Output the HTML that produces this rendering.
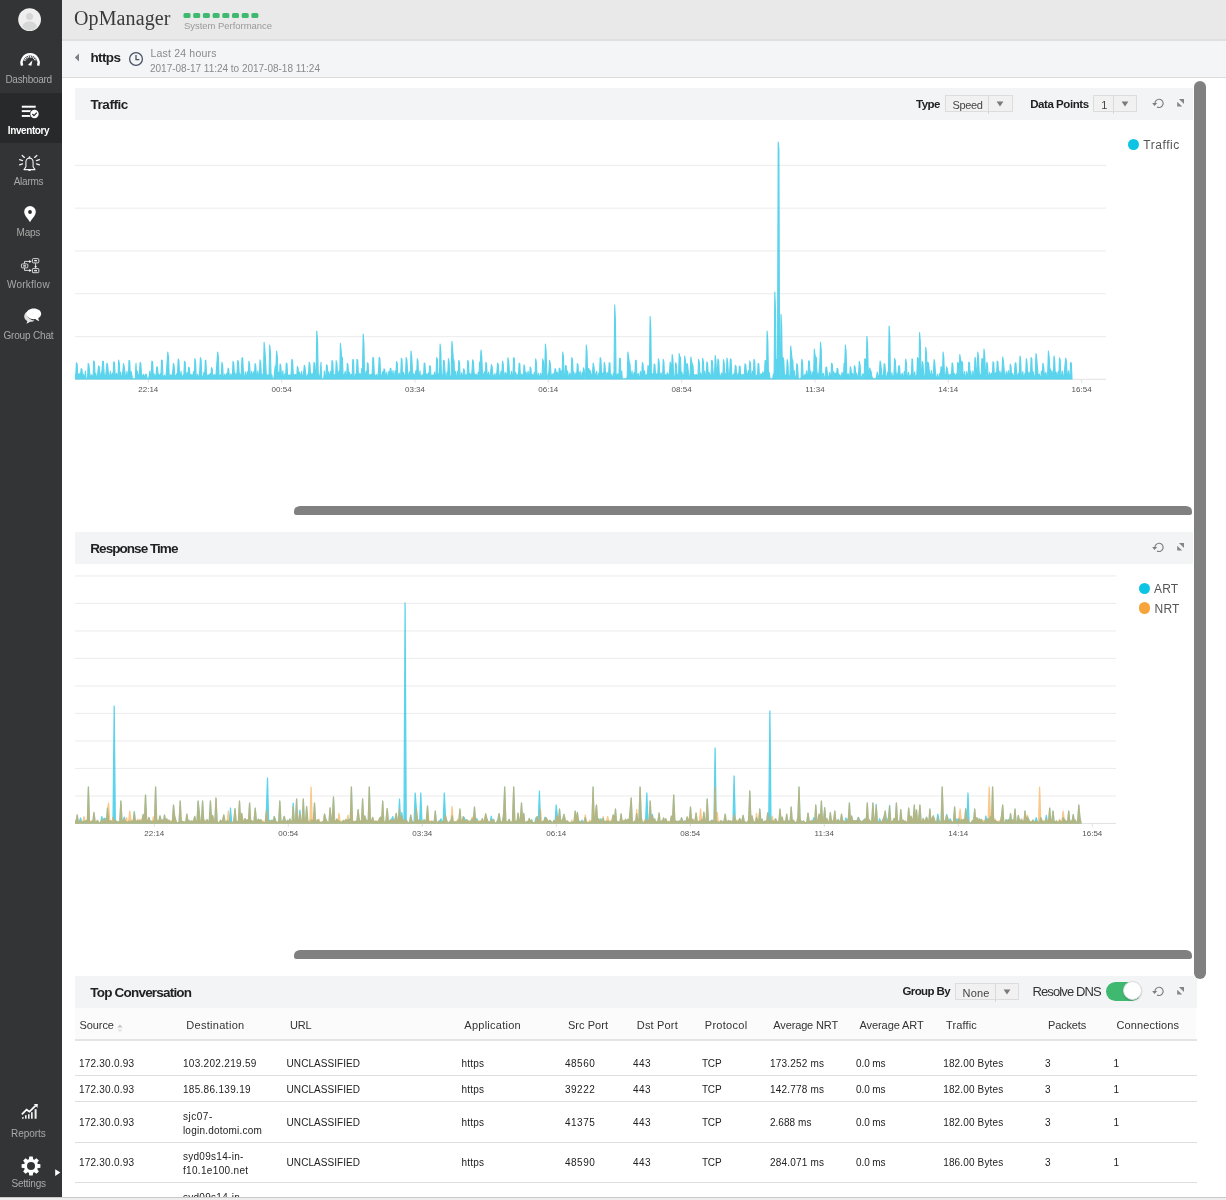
<!DOCTYPE html>
<html>
<head>
<meta charset="utf-8">
<title>OpManager</title>
<style>
*{box-sizing:border-box;margin:0;padding:0}
html,body{width:1226px;height:1200px;overflow:hidden;background:#fff}
body{font-family:"Liberation Sans",sans-serif;color:#222;position:relative}
.abs{position:absolute}
.t{position:absolute;white-space:nowrap;line-height:1}
#side{position:absolute;left:0;top:0;width:62px;height:1197px;background:#333435}
#side .act{position:absolute;left:0;top:93px;width:62px;height:49.5px;background:#28292a}
#side .lb{position:absolute;left:-21px;width:100px;text-align:center;font-size:10px;color:#a9a9a9;line-height:1;white-space:nowrap}
#side svg{position:absolute}
#bot{position:absolute;left:0;top:1197px;width:1226px;height:3px;background:#eee;border-top:1px solid #c9c9c9}
#top{position:absolute;left:62px;top:0;width:1164px;height:41px;background:#e9e9e9;border-bottom:2px solid #dfdfdf}
#sub{position:absolute;left:62px;top:41px;width:1164px;height:37px;background:#f4f5f7;border-bottom:1px solid #dcdcdc}
.ph{position:absolute;left:75px;width:1121.8px;height:32px;background:#f3f4f6}
.ph b{position:absolute;left:15px;top:9px;font-size:13px;line-height:14px;color:#222;letter-spacing:-0.3px}
.hs{position:absolute;left:294px;width:898px;height:8.9px;border-radius:6px 6px 2.5px 2.5px/5.5px 5.5px 2.5px 2.5px;background:#808080}
#vs{position:absolute;left:1194px;top:81px;width:11.8px;height:897.5px;border-radius:6px;background:#808080;box-shadow:-1px 0 0 #fff}
.sel{position:absolute;height:17.2px;border:1px solid #dcdcdc;background:#f1f1f1;font-size:11px;color:#444}
.ax{position:absolute;font-size:8px;color:#555;line-height:1;width:40px;text-align:center}
.lg{position:absolute;font-size:13px;color:#555;line-height:1}
.dot{position:absolute;width:11.4px;height:11.4px;border-radius:50%}
.th{position:absolute;top:1019px;font-size:11.5px;color:#333;line-height:1;white-space:nowrap}
.td{position:absolute;font-size:11px;color:#222;line-height:13px;white-space:nowrap}
.rl{position:absolute;left:75px;width:1121.8px;height:1px;background:#dedede}
</style>
</head>
<body>
<div id="side">
  <div class="act"></div>
  <svg style="left:18px;top:8px" width="24" height="24" viewBox="0 0 24 24"><circle cx="11.6" cy="11.6" r="11.4" fill="#efefef"/><circle cx="11.6" cy="8.6" r="3.5" fill="#d6d6d6"/><path d="M4.4 18.6 C5 14.8 8 13.4 11.6 13.4 C15.2 13.4 18.2 14.8 18.8 18.6 C17 21.3 14.4 22.6 11.6 22.6 C8.8 22.6 6.2 21.3 4.4 18.6Z" fill="#d6d6d6"/></svg>
  <!-- dashboard gauge -->
  <svg style="left:18px;top:50px" width="24" height="20" viewBox="18 50 24 20">
    <path d="M22.1 65.6 A8.5 8.5 0 1 1 38.1 65.6" fill="none" stroke="#fff" stroke-width="2.4"/>
    <path d="M24.6 60.6 A5.8 5.8 0 0 1 35.6 60.6" fill="none" stroke="#fff" stroke-width="2" stroke-dasharray="0.95 0.8"/>
    <path d="M28.0 65.0 L32.5 60.3 L31.3 65.8 Z" fill="#fff"/>
  </svg>
  <!-- inventory -->
  <svg style="left:18px;top:102px" width="24" height="20" viewBox="18 102 24 20">
    <rect x="21.8" y="105.7" width="13.9" height="2" fill="#fff"/>
    <rect x="21.8" y="110.2" width="9" height="1.9" fill="#fff"/>
    <rect x="21.8" y="115" width="9" height="1.9" fill="#fff"/>
    <circle cx="34.5" cy="114" r="4.9" fill="#28292a"/>
    <circle cx="34.5" cy="114" r="4.2" fill="#fff"/>
    <path d="M32.4 114 L34 115.6 L36.8 112.6" fill="none" stroke="#28292a" stroke-width="1.3"/>
  </svg>
  <!-- alarms -->
  <svg style="left:18px;top:152px" width="24" height="22" viewBox="18 152 24 22">
    <g fill="none" stroke="#f2f2f2" stroke-width="1.1" stroke-linejoin="round">
      <path d="M24 169.6 L25.9 166.8 V162 A3.6 3.9 0 0 1 33.1 162 V166.8 L35 169.6 Z"/>
      <path d="M29.5 158.2 V156.3" stroke-width="1.4"/>
      <path d="M28.3 170 H30.7 V171 H28.3Z" fill="#f2f2f2" stroke="none"/>
    </g>
    <g stroke="#f2f2f2" stroke-width="1.3" stroke-linecap="round">
      <path d="M22.2 155.4 L24.4 157.4"/><path d="M19.6 159.7 L22.5 160.6"/><path d="M19.6 164.8 L22.5 163.8"/>
      <path d="M36.8 155.4 L34.6 157.4"/><path d="M39.4 159.7 L36.5 160.6"/><path d="M39.4 164.8 L36.5 163.8"/>
    </g>
  </svg>
  <!-- maps -->
  <svg style="left:22px;top:204px" width="16" height="20" viewBox="22 204 16 20">
    <path d="M30 222.2 C28.4 219 24.2 215.8 24.2 211.8 A5.8 5.8 0 0 1 35.8 211.8 C35.8 215.8 31.6 219 30 222.2Z" fill="#fff"/>
    <circle cx="30" cy="212" r="1.9" fill="#2b2b2b"/>
  </svg>
  <!-- workflow -->
  <svg style="left:18px;top:255px" width="24" height="20" viewBox="18 255 24 20">
    <g fill="none" stroke="#e8e8e8" stroke-width="0.9">
      <rect x="21.4" y="263.9" width="6.4" height="4" rx="1"/>
      <rect x="32.4" y="258.6" width="6.4" height="4.3" rx="1"/>
      <rect x="32.4" y="268.6" width="6.4" height="4.1" rx="0.6"/>
      <path d="M24.5 263.6 V261.4 H30"/><path d="M24.5 268.2 V270.4 H30"/><path d="M35.6 263.2 V267"/>
    </g>
    <g fill="#fff">
      <rect x="23.2" y="265.3" width="2.8" height="1.2"/><rect x="34.2" y="260.1" width="2.8" height="1.2"/><rect x="34.2" y="270.1" width="2.8" height="1.2"/>
      <path d="M29.3 259.9 L31.6 261.4 L29.3 262.9Z"/><path d="M29.3 268.9 L31.6 270.4 L29.3 271.9Z"/><path d="M34.2 266.3 H37 L35.6 268.2Z"/>
    </g>
  </svg>
  <!-- group chat -->
  <svg style="left:20px;top:306px" width="24" height="20" viewBox="20 306 24 20">
    <path d="M31.5 321.8 C27 321.8 24.2 319.4 24.2 316.4 C24.2 314.2 25.6 312.5 27.4 311.6 C25.8 316.2 29 320 34.5 320.6 C33.6 321.4 32.6 321.8 31.5 321.8Z" fill="#e0e0e0"/>
    <path d="M26.2 323.8 C27.2 322.6 27.5 321.6 27.4 320.6 L30.4 321.6 C29.2 322.3 27.8 323.2 26.2 323.8Z" fill="#f4f4f4"/>
    <path d="M33.8 308.5 C38 308.5 41.2 310.8 41.2 313.8 C41.2 315.6 40.1 317.2 38.3 318.1 C38.3 319.3 38.7 320.3 39.3 321.1 C37.7 320.8 36.4 320.1 35.5 319.1 C35 319.1 34.4 319.2 33.8 319.2 C29.6 319.2 26.5 316.8 26.5 313.8 C26.5 310.8 29.6 308.5 33.8 308.5Z" fill="#fff"/>
  </svg>
  <!-- reports -->
  <svg style="left:18px;top:1100px" width="24" height="22" viewBox="18 1100 24 22">
    <g fill="#eee">
      <path d="M22 1118.7 V1117.6 L23.6 1116.8 V1118.7Z"/><rect x="25" y="1115.2" width="1.6" height="3.5"/><rect x="28" y="1114.2" width="1.6" height="4.5"/><rect x="31" y="1112.2" width="1.7" height="6.5"/><rect x="34.6" y="1109.2" width="2" height="9.5"/>
    </g>
    <path d="M21.8 1114.4 L26.6 1109.7 L29.5 1111.6 L35.6 1105.6" fill="none" stroke="#fff" stroke-width="1.7"/>
    <path d="M33.8 1104 L37.8 1103.9 L37.5 1107.9Z" fill="#fff"/>
  </svg>
  <!-- settings gear -->
  <svg style="left:20px;top:1155px" width="22" height="22" viewBox="-11 -11 22 22">
    <g fill="#fff">
      <circle r="6.9"/>
      <g id="tooth"><path d="M-1.7 -9.4 H1.7 L2.3 -6 H-2.3Z"/></g>
      <path d="M-1.7 -9.4 H1.7 L2.3 -6 H-2.3Z" transform="rotate(45)"/><path d="M-1.7 -9.4 H1.7 L2.3 -6 H-2.3Z" transform="rotate(90)"/>
      <path d="M-1.7 -9.4 H1.7 L2.3 -6 H-2.3Z" transform="rotate(135)"/><path d="M-1.7 -9.4 H1.7 L2.3 -6 H-2.3Z" transform="rotate(180)"/>
      <path d="M-1.7 -9.4 H1.7 L2.3 -6 H-2.3Z" transform="rotate(225)"/><path d="M-1.7 -9.4 H1.7 L2.3 -6 H-2.3Z" transform="rotate(270)"/>
      <path d="M-1.7 -9.4 H1.7 L2.3 -6 H-2.3Z" transform="rotate(315)"/>
    </g>
    <circle r="4" fill="#333435"/>
  </svg>
  <svg style="left:55px;top:1169px" width="6" height="8" viewBox="0 0 6 8"><path d="M0.2 0.3 L5.4 3.6 L0.2 6.9Z" fill="#fff"/></svg>
</div>

<div id="top">
  <svg class="abs" style="left:121px;top:12px" width="80" height="7" viewBox="0 0 80 7">
    <g fill="#3fb870">
      <rect x="0.5" y="1" width="7" height="5" rx="1.5"/><rect x="10.2" y="1" width="7" height="5" rx="1.5"/>
      <rect x="19.9" y="1" width="7" height="5" rx="1.5"/><rect x="29.6" y="1" width="7" height="5" rx="1.5"/>
      <rect x="39.3" y="1" width="7" height="5" rx="1.5"/><rect x="49" y="1" width="7" height="5" rx="1.5"/>
      <rect x="58.7" y="1" width="7" height="5" rx="1.5"/><rect x="68.4" y="1" width="7" height="5" rx="1.5"/>
    </g>
  </svg>
</div>
<div id="sub">
  <svg class="abs" style="left:12px;top:12px" width="6" height="9" viewBox="0 0 6 9"><path d="M5 0.5 L0.8 4.5 L5 8.5 Z" fill="#7b7f86"/></svg>
  <svg class="abs" style="left:66px;top:10px" width="16" height="16" viewBox="0 0 16 16"><circle cx="8" cy="8" r="6.4" fill="none" stroke="#4a5262" stroke-width="1.3"/><path d="M8 4 V8.6 H11.3" fill="none" stroke="#4a5262" stroke-width="1.3"/></svg>
</div>

<div class="ph" style="top:88px"></div>
<div class="sel" style="left:945px;top:94.5px;width:68px"><i class="abs" style="left:42px;top:0;width:1px;height:18px;background:#dadada"></i><svg class="abs" style="left:50px;top:5.5px" width="8" height="6"><path d="M0.6 0.6 H7.4 L4 5.6Z" fill="#7a7a7a"/></svg></div>
<div class="sel" style="left:1093.3px;top:94.5px;width:44.2px"><i class="abs" style="left:19px;top:0;width:1px;height:18px;background:#dadada"></i><svg class="abs" style="left:27px;top:5.5px" width="8" height="6"><path d="M0.6 0.6 H7.4 L4 5.6Z" fill="#7a7a7a"/></svg></div>
<svg class="abs" style="left:1150px;top:96.0px" width="16" height="14" viewBox="1150 96 16 14"><path d="M1155.0 104.0 A4.1 4.1 0 1 1 1157.0 106.9" fill="none" stroke="#7d7d7d" stroke-width="1.15"/><path d="M1152.2 103.1 L1157.3 103.1 L1154.4 105.9Z" fill="#7d7d7d"/></svg><svg class="abs" style="left:1175px;top:97.0px" width="12" height="12" viewBox="1175 97 12 12"><path d="M1178.9 99.1 H1184 V103.9Z" fill="#858585"/><path d="M1177.2 101.7 L1182.2 106.5 H1177.2Z" fill="#858585"/></svg>
<svg class="abs" style="left:75px;top:121px" width="1120" height="280" viewBox="75 121 1120 280">
<rect x="75" y="164.8" width="1031" height="1.1" fill="#ededed"/>
<rect x="75" y="207.6" width="1031" height="1.1" fill="#ededed"/>
<rect x="75" y="250.4" width="1031" height="1.1" fill="#ededed"/>
<rect x="75" y="293.2" width="1031" height="1.1" fill="#ededed"/>
<rect x="75" y="336.1" width="1031" height="1.1" fill="#ededed"/>
<rect x="75" y="378.8" width="1031" height="1.1" fill="#e4e4e4"/>
<rect x="147.8" y="379.7" width="1" height="3" fill="#e0e0e0"/>
<rect x="281.1" y="379.7" width="1" height="3" fill="#e0e0e0"/>
<rect x="414.5" y="379.7" width="1" height="3" fill="#e0e0e0"/>
<rect x="547.8" y="379.7" width="1" height="3" fill="#e0e0e0"/>
<rect x="681.1" y="379.7" width="1" height="3" fill="#e0e0e0"/>
<rect x="814.5" y="379.7" width="1" height="3" fill="#e0e0e0"/>
<rect x="947.8" y="379.7" width="1" height="3" fill="#e0e0e0"/>
<rect x="1081.1" y="379.7" width="1" height="3" fill="#e0e0e0"/>
<g opacity="0.72"><path d="M75.0 379.0 L75.0 374.6 L75.7 376.6 L76.4 362.9 L77.1 364.1 L77.8 376.4 L78.5 375.5 L79.2 373.4 L79.8 378.2 L80.5 375.1 L81.2 368.5 L81.9 369.4 L82.6 376.4 L83.3 374.1 L84.0 377.5 L84.7 377.2 L85.4 371.0 L86.1 378.7 L86.8 378.7 L87.5 378.7 L88.2 363.4 L88.9 365.2 L89.5 370.9 L90.2 376.0 L90.9 378.8 L91.6 374.9 L92.3 376.7 L93.0 377.5 L93.7 361.0 L94.4 361.7 L95.1 375.6 L95.8 373.6 L96.5 377.9 L97.2 377.5 L97.9 372.1 L98.6 365.8 L99.2 366.9 L99.9 372.6 L100.6 377.0 L101.3 375.1 L102.0 370.6 L102.7 361.2 L103.4 361.3 L104.1 373.0 L104.8 377.9 L105.5 376.6 L106.2 371.0 L106.9 363.1 L107.6 364.9 L108.3 372.5 L108.9 376.8 L109.6 377.1 L110.3 371.4 L111.0 375.6 L111.7 376.2 L112.4 373.0 L113.1 375.5 L113.8 361.8 L114.5 362.5 L115.2 375.9 L115.9 375.9 L116.6 373.2 L117.3 376.5 L118.0 378.8 L118.6 360.0 L119.3 363.1 L120.0 378.0 L120.7 372.3 L121.4 377.0 L122.1 378.8 L122.8 371.6 L123.5 363.6 L124.2 366.5 L124.9 371.9 L125.6 378.6 L126.3 376.0 L127.0 371.4 L127.7 378.7 L128.3 378.7 L129.0 360.3 L129.7 361.1 L130.4 376.5 L131.1 371.5 L131.8 374.8 L132.5 378.7 L133.2 378.7 L133.9 378.7 L134.6 378.7 L135.3 378.7 L136.0 363.4 L136.7 377.3 L137.4 371.1 L138.0 375.3 L138.7 376.3 L139.4 373.2 L140.1 362.3 L140.8 363.7 L141.5 374.3 L142.2 375.8 L142.9 376.2 L143.6 374.3 L144.3 377.8 L145.0 375.9 L145.7 374.1 L146.4 374.5 L147.1 378.7 L147.7 378.7 L148.4 378.7 L149.1 376.5 L149.8 371.0 L150.5 376.2 L151.2 375.4 L151.9 361.1 L152.6 361.9 L153.3 377.1 L154.0 373.7 L154.7 377.3 L155.4 376.6 L156.1 374.2 L156.8 366.9 L157.4 367.0 L158.1 373.9 L158.8 374.8 L159.5 378.0 L160.2 373.9 L160.9 376.3 L161.6 360.0 L162.3 360.5 L163.0 377.8 L163.7 378.1 L164.4 375.0 L165.1 378.6 L165.8 376.8 L166.5 371.1 L167.1 361.5 L167.8 352.0 L168.5 357.4 L169.2 376.0 L169.9 378.6 L170.6 374.7 L171.3 377.5 L172.0 375.3 L172.7 372.0 L173.4 363.3 L174.1 365.6 L174.8 375.0 L175.5 375.6 L176.2 378.1 L176.8 373.5 L177.5 374.5 L178.2 359.1 L178.9 360.5 L179.6 375.5 L180.3 378.1 L181.0 371.3 L181.7 376.8 L182.4 377.9 L183.1 374.9 L183.8 376.4 L184.5 361.3 L185.2 362.5 L185.9 375.3 L186.5 377.6 L187.2 372.6 L187.9 376.7 L188.6 367.2 L189.3 368.1 L190.0 374.5 L190.7 376.7 L191.4 374.8 L192.1 374.9 L192.8 378.1 L193.5 371.6 L194.2 378.3 L194.9 358.6 L195.6 362.2 L196.2 376.7 L196.9 378.5 L197.6 374.3 L198.3 377.9 L199.0 376.9 L199.7 371.5 L200.4 357.6 L201.1 359.7 L201.8 374.4 L202.5 377.7 L203.2 378.5 L203.9 372.4 L204.6 378.2 L205.3 360.2 L205.9 360.6 L206.6 376.9 L207.3 377.6 L208.0 374.7 L208.7 375.4 L209.4 375.2 L210.1 373.6 L210.8 378.8 L211.5 367.6 L212.2 368.9 L212.9 378.5 L213.6 375.8 L214.3 374.6 L215.0 375.7 L215.6 378.3 L216.3 371.1 L217.0 361.3 L217.7 352.0 L218.4 357.4 L219.1 377.5 L219.8 376.1 L220.5 374.8 L221.2 378.7 L221.9 362.4 L222.6 364.9 L223.3 377.6 L224.0 378.1 L224.7 374.1 L225.3 378.1 L226.0 375.7 L226.7 373.5 L227.4 376.5 L228.1 368.1 L228.8 369.7 L229.5 378.2 L230.2 377.1 L230.9 373.9 L231.6 376.8 L232.3 377.5 L233.0 361.4 L233.7 362.9 L234.4 374.6 L235.0 372.9 L235.7 375.9 L236.4 378.1 L237.1 371.4 L237.8 360.4 L238.5 361.8 L239.2 373.2 L239.9 376.9 L240.6 375.2 L241.3 372.7 L242.0 357.9 L242.7 358.1 L243.4 372.0 L244.1 377.7 L244.7 378.5 L245.4 371.8 L246.1 375.4 L246.8 378.3 L247.5 371.5 L248.2 378.0 L248.9 361.2 L249.6 364.4 L250.3 375.6 L251.0 377.7 L251.7 371.0 L252.4 375.2 L253.1 375.7 L253.8 371.8 L254.4 375.1 L255.1 363.5 L255.8 366.0 L256.5 377.3 L257.2 375.9 L257.9 370.9 L258.6 377.3 L259.3 378.4 L260.0 359.8 L260.7 363.2 L261.4 375.9 L262.1 373.9 L262.8 377.5 L263.5 375.8 L264.1 342.3 L264.8 349.6 L265.5 359.0 L266.2 373.5 L266.9 375.3 L267.6 375.4 L268.3 374.8 L269.0 378.0 L269.7 345.0 L270.4 351.8 L271.1 376.3 L271.8 374.9 L272.5 378.7 L273.2 378.7 L273.8 378.7 L274.5 373.3 L275.2 366.0 L275.9 367.4 L276.6 351.0 L277.3 356.6 L278.0 377.3 L278.7 372.2 L279.4 378.6 L280.1 364.0 L280.8 365.6 L281.5 377.1 L282.2 378.1 L282.9 370.8 L283.5 378.2 L284.2 377.4 L284.9 373.7 L285.6 376.7 L286.3 363.0 L287.0 363.8 L287.7 378.0 L288.4 375.9 L289.1 374.8 L289.8 376.1 L290.5 376.3 L291.2 372.6 L291.9 359.2 L292.6 361.1 L293.2 373.1 L293.9 377.7 L294.6 375.1 L295.3 374.3 L296.0 375.2 L296.7 376.5 L297.4 366.4 L298.1 368.5 L298.8 377.7 L299.5 372.0 L300.2 375.2 L300.9 378.8 L301.6 371.3 L302.3 378.3 L302.9 376.0 L303.6 372.7 L304.3 365.2 L305.0 367.1 L305.7 372.8 L306.4 378.2 L307.1 378.1 L307.8 374.2 L308.5 374.8 L309.2 362.2 L309.9 364.3 L310.6 375.9 L311.3 377.5 L312.0 373.1 L312.6 375.8 L313.3 376.7 L314.0 362.4 L314.7 364.0 L315.4 376.3 L316.1 374.7 L316.8 331.0 L317.5 340.6 L318.2 372.6 L318.9 376.6 L319.6 378.7 L320.3 372.1 L321.0 362.4 L321.7 378.7 L322.3 378.7 L323.0 378.7 L323.7 378.7 L324.4 371.0 L325.1 378.0 L325.8 378.0 L326.5 364.9 L327.2 365.6 L327.9 375.7 L328.6 371.9 L329.3 378.0 L330.0 374.8 L330.7 371.0 L331.4 376.3 L332.0 360.6 L332.7 361.5 L333.4 374.9 L334.1 378.6 L334.8 374.3 L335.5 378.6 L336.2 360.7 L336.9 363.6 L337.6 376.0 L338.3 375.0 L339.0 370.9 L339.7 378.1 L340.4 343.3 L341.1 350.4 L341.7 357.4 L342.4 357.5 L343.1 375.0 L343.8 374.7 L344.5 374.9 L345.2 371.4 L345.9 376.0 L346.6 377.6 L347.3 363.3 L348.0 365.0 L348.7 377.8 L349.4 372.2 L350.1 374.6 L350.8 378.1 L351.4 374.4 L352.1 378.0 L352.8 359.6 L353.5 360.0 L354.2 378.0 L354.9 378.2 L355.6 374.1 L356.3 378.4 L357.0 359.4 L357.7 360.2 L358.4 374.9 L359.1 375.6 L359.8 373.3 L360.5 377.4 L361.1 374.7 L361.8 368.4 L362.5 369.7 L363.2 334.0 L363.9 343.0 L364.6 375.9 L365.3 377.7 L366.0 371.4 L366.7 377.1 L367.4 362.8 L368.1 363.4 L368.8 377.2 L369.5 374.8 L370.2 374.8 L370.8 374.8 L371.5 376.0 L372.2 372.9 L372.9 357.4 L373.6 358.6 L374.3 373.7 L375.0 375.3 L375.7 376.3 L376.4 374.6 L377.1 378.0 L377.8 375.6 L378.5 371.3 L379.2 357.4 L379.9 358.6 L380.5 372.4 L381.2 376.6 L381.9 377.1 L382.6 371.6 L383.3 376.9 L384.0 368.9 L384.7 369.7 L385.4 375.6 L386.1 378.0 L386.8 372.3 L387.5 378.4 L388.2 377.6 L388.9 371.3 L389.6 378.6 L390.2 368.3 L390.9 368.6 L391.6 374.7 L392.3 376.4 L393.0 370.5 L393.7 377.8 L394.4 377.8 L395.1 370.8 L395.8 378.2 L396.5 361.5 L397.2 363.1 L397.9 375.8 L398.6 377.1 L399.3 373.1 L399.9 377.6 L400.6 378.3 L401.3 358.4 L402.0 359.5 L402.7 378.7 L403.4 372.3 L404.1 376.0 L404.8 376.0 L405.5 372.7 L406.2 357.5 L406.9 359.9 L407.6 371.1 L408.3 376.2 L408.9 376.5 L409.6 371.9 L410.3 377.3 L411.0 351.0 L411.7 356.6 L412.4 369.6 L413.1 376.3 L413.8 373.8 L414.5 375.1 L415.2 375.5 L415.9 370.6 L416.6 376.0 L417.3 358.7 L418.0 361.4 L418.6 377.3 L419.3 378.6 L420.0 370.7 L420.7 378.7 L421.4 377.5 L422.1 374.3 L422.8 377.1 L423.5 377.2 L424.2 363.1 L424.9 363.4 L425.6 374.8 L426.3 373.7 L427.0 378.4 L427.7 375.0 L428.3 373.0 L429.0 374.6 L429.7 365.7 L430.4 366.2 L431.1 378.1 L431.8 375.5 L432.5 375.0 L433.2 375.0 L433.9 376.0 L434.6 372.1 L435.3 378.3 L436.0 375.0 L436.7 357.6 L437.4 359.7 L438.0 376.0 L438.7 374.0 L439.4 377.7 L440.1 344.0 L440.8 351.0 L441.5 378.6 L442.2 375.6 L442.9 374.3 L443.6 360.4 L444.3 360.9 L445.0 371.2 L445.7 378.1 L446.4 378.4 L447.1 372.0 L447.7 378.1 L448.4 358.6 L449.1 362.0 L449.8 378.2 L450.5 378.1 L451.2 374.5 L451.9 341.3 L452.6 348.8 L453.3 358.9 L454.0 360.7 L454.7 376.9 L455.4 371.2 L456.1 377.4 L456.8 378.1 L457.4 371.4 L458.1 376.9 L458.8 360.3 L459.5 362.2 L460.2 376.5 L460.9 378.7 L461.6 372.7 L462.3 378.2 L463.0 375.8 L463.7 368.7 L464.4 370.4 L465.1 376.8 L465.8 374.7 L466.5 374.8 L467.1 375.7 L467.8 360.4 L468.5 362.1 L469.2 377.8 L469.9 373.6 L470.6 374.7 L471.3 378.0 L472.0 370.7 L472.7 359.7 L473.4 361.6 L474.1 372.9 L474.8 374.8 L475.5 375.2 L476.2 374.1 L476.8 375.5 L477.5 378.7 L478.2 372.0 L478.9 378.2 L479.6 362.1 L480.3 363.7 L481.0 350.0 L481.7 355.8 L482.4 371.5 L483.1 375.3 L483.8 375.6 L484.5 371.9 L485.2 378.3 L485.9 362.3 L486.5 363.9 L487.2 375.2 L487.9 376.9 L488.6 372.1 L489.3 376.4 L490.0 377.9 L490.7 371.0 L491.4 364.5 L492.1 366.8 L492.8 374.3 L493.5 376.8 L494.2 376.1 L494.9 373.5 L495.6 378.4 L496.2 376.0 L496.9 372.0 L497.6 363.1 L498.3 364.9 L499.0 374.1 L499.7 377.1 L500.4 376.1 L501.1 371.2 L501.8 376.5 L502.5 361.0 L503.2 363.8 L503.9 377.4 L504.6 376.2 L505.3 372.3 L505.9 374.6 L506.6 374.9 L507.3 372.5 L508.0 357.7 L508.7 361.3 L509.4 372.1 L510.1 376.4 L510.8 377.9 L511.5 371.2 L512.2 377.8 L512.9 376.6 L513.6 357.8 L514.3 358.0 L515.0 378.4 L515.6 372.5 L516.3 374.8 L517.0 377.3 L517.7 374.3 L518.4 375.5 L519.1 363.3 L519.8 363.7 L520.5 377.0 L521.2 376.4 L521.9 373.7 L522.6 376.6 L523.3 378.3 L524.0 364.8 L524.7 367.2 L525.3 376.9 L526.0 372.1 L526.7 378.0 L527.4 374.5 L528.1 371.4 L528.8 376.4 L529.5 377.7 L530.2 367.0 L530.9 368.4 L531.6 376.7 L532.3 374.4 L533.0 375.8 L533.7 375.3 L534.4 372.5 L535.0 378.6 L535.7 358.9 L536.4 362.9 L537.1 377.3 L537.8 377.1 L538.5 373.4 L539.2 377.0 L539.9 378.1 L540.6 373.4 L541.3 376.4 L542.0 377.5 L542.7 359.1 L543.4 361.5 L544.1 377.7 L544.7 370.6 L545.4 344.0 L546.1 351.0 L546.8 373.2 L547.5 376.7 L548.2 378.0 L548.9 371.3 L549.6 360.4 L550.3 363.9 L551.0 372.9 L551.7 378.0 L552.4 376.2 L553.1 373.3 L553.8 375.7 L554.4 375.0 L555.1 368.5 L555.8 370.0 L556.5 378.1 L557.2 372.1 L557.9 377.6 L558.6 375.0 L559.3 368.1 L560.0 368.6 L560.7 377.8 L561.4 370.8 L562.1 375.0 L562.8 352.0 L563.5 357.4 L564.1 378.7 L564.8 378.1 L565.5 365.6 L566.2 365.8 L566.9 376.1 L567.6 370.9 L568.3 376.3 L569.0 378.2 L569.7 373.1 L570.4 376.7 L571.1 375.7 L571.8 357.6 L572.5 359.4 L573.2 374.5 L573.8 372.0 L574.5 375.4 L575.2 377.9 L575.9 372.9 L576.6 378.3 L577.3 363.6 L578.0 364.6 L578.7 378.2 L579.4 374.5 L580.1 371.1 L580.8 377.8 L581.5 377.2 L582.2 372.4 L582.9 375.4 L583.5 367.7 L584.2 369.9 L584.9 378.5 L585.6 375.6 L586.3 345.0 L587.0 351.8 L587.7 376.4 L588.4 368.6 L589.1 368.9 L589.8 374.9 L590.5 370.9 L591.2 378.1 L591.9 374.9 L592.6 371.9 L593.2 363.1 L593.9 366.3 L594.6 372.2 L595.3 377.0 L596.0 374.7 L596.7 371.2 L597.4 377.0 L598.1 378.2 L598.8 372.9 L599.5 374.6 L600.2 357.6 L600.9 359.2 L601.6 374.7 L602.3 375.2 L602.9 372.9 L603.6 376.5 L604.3 362.3 L605.0 365.3 L605.7 375.4 L606.4 377.2 L607.1 372.2 L607.8 375.2 L608.5 375.0 L609.2 362.7 L609.9 363.0 L610.6 378.1 L611.3 374.3 L612.0 378.3 L612.6 378.6 L613.3 373.3 L614.0 375.3 L614.7 305.0 L615.4 319.8 L616.1 376.5 L616.8 377.0 L617.5 373.8 L618.2 374.8 L618.9 375.3 L619.6 358.4 L620.3 358.4 L621.0 377.7 L621.7 371.0 L622.3 378.7 L623.0 378.7 L623.7 378.7 L624.4 378.7 L625.1 378.7 L625.8 378.7 L626.5 378.7 L627.2 376.8 L627.9 352.0 L628.6 357.4 L629.3 362.3 L630.0 364.1 L630.7 378.0 L631.4 375.6 L632.0 370.8 L632.7 378.2 L633.4 376.2 L634.1 372.6 L634.8 378.0 L635.5 360.2 L636.2 360.6 L636.9 376.3 L637.6 375.1 L638.3 373.6 L639.0 377.5 L639.7 377.9 L640.4 371.4 L641.1 376.1 L641.7 375.3 L642.4 362.5 L643.1 365.0 L643.8 378.6 L644.5 370.8 L645.2 375.0 L645.9 376.5 L646.6 374.6 L647.3 378.1 L648.0 365.5 L648.7 366.5 L649.4 376.0 L650.1 316.5 L650.8 329.0 L651.4 376.0 L652.1 374.8 L652.8 373.7 L653.5 376.5 L654.2 364.1 L654.9 364.6 L655.6 375.9 L656.3 375.1 L657.0 373.5 L657.7 378.5 L658.4 358.8 L659.1 361.8 L659.8 378.1 L660.5 375.6 L661.1 372.8 L661.8 378.1 L662.5 378.3 L663.2 359.3 L663.9 361.8 L664.6 378.2 L665.3 374.6 L666.0 377.3 L666.7 374.8 L667.4 372.7 L668.1 375.1 L668.8 377.3 L669.5 371.8 L670.2 362.0 L670.8 364.6 L671.5 374.2 L672.2 354.5 L672.9 359.4 L673.6 374.9 L674.3 378.6 L675.0 375.5 L675.7 362.7 L676.4 365.1 L677.1 376.4 L677.8 374.5 L678.5 378.2 L679.2 353.5 L679.9 357.3 L680.5 357.4 L681.2 376.6 L681.9 372.1 L682.6 376.8 L683.3 376.8 L684.0 373.3 L684.7 356.0 L685.4 360.6 L686.1 372.9 L686.8 363.8 L687.5 364.1 L688.2 370.9 L688.9 377.6 L689.6 378.7 L690.2 372.2 L690.9 357.0 L691.6 361.4 L692.3 364.0 L693.0 365.8 L693.7 378.5 L694.4 374.9 L695.1 374.6 L695.8 377.3 L696.5 374.5 L697.2 377.0 L697.9 377.5 L698.6 359.4 L699.3 362.4 L699.9 374.9 L700.6 373.0 L701.3 376.7 L702.0 378.1 L702.7 358.3 L703.4 361.8 L704.1 377.1 L704.8 371.4 L705.5 377.8 L706.2 376.4 L706.9 361.9 L707.6 363.2 L708.3 376.3 L709.0 372.2 L709.6 374.8 L710.3 375.1 L711.0 374.5 L711.7 360.3 L712.4 361.2 L713.1 371.6 L713.8 378.5 L714.5 377.3 L715.2 355.5 L715.9 360.2 L716.6 375.1 L717.3 370.6 L718.0 359.0 L718.7 361.0 L719.3 374.4 L720.0 376.6 L720.7 376.3 L721.4 373.0 L722.1 374.7 L722.8 376.9 L723.5 359.5 L724.2 363.2 L724.9 376.7 L725.6 373.8 L726.3 375.1 L727.0 358.0 L727.7 362.2 L728.4 375.1 L729.0 378.2 L729.7 371.6 L730.4 358.9 L731.1 359.6 L731.8 374.2 L732.5 375.7 L733.2 377.5 L733.9 373.6 L734.6 375.6 L735.3 365.2 L736.0 366.4 L736.7 375.1 L737.4 378.4 L738.1 373.4 L738.7 375.8 L739.4 366.1 L740.1 366.4 L740.8 378.7 L741.5 375.4 L742.2 374.4 L742.9 377.3 L743.6 374.6 L744.3 374.8 L745.0 363.7 L745.7 364.8 L746.4 371.8 L747.1 375.0 L747.7 374.8 L748.4 370.6 L749.1 376.9 L749.8 360.8 L750.5 364.3 L751.2 375.1 L751.9 378.2 L752.6 371.1 L753.3 374.9 L754.0 359.2 L754.7 361.3 L755.4 377.8 L756.1 376.5 L756.8 374.9 L757.4 378.7 L758.1 363.5 L758.8 363.7 L759.5 377.9 L760.2 377.6 L760.9 373.6 L761.6 374.7 L762.3 374.8 L763.0 371.7 L763.7 375.1 L764.4 376.5 L765.1 360.3 L765.8 361.3 L766.5 376.6 L767.1 331.0 L767.8 340.6 L768.5 376.5 L769.2 372.4 L769.9 377.8 L770.6 378.7 L771.3 378.7 L772.0 378.7 L772.7 378.7 L773.4 374.0 L774.1 376.5 L774.8 292.0 L775.5 309.4 L776.2 375.6 L776.8 359.5 L777.5 361.6 L778.2 142.0 L778.9 149.1 L779.6 374.8 L780.3 376.7 L781.0 314.4 L781.7 327.3 L782.4 374.6 L783.1 357.6 L783.8 360.7 L784.5 376.7 L785.2 377.0 L785.9 374.3 L786.5 376.9 L787.2 359.5 L787.9 363.1 L788.6 378.3 L789.3 377.8 L790.0 374.2 L790.7 346.0 L791.4 352.6 L792.1 359.4 L792.8 360.6 L793.5 376.7 L794.2 370.5 L794.9 378.0 L795.6 378.0 L796.2 374.8 L796.9 363.6 L797.6 365.8 L798.3 378.7 L799.0 378.7 L799.7 378.7 L800.4 378.7 L801.1 377.8 L801.8 359.3 L802.5 362.1 L803.2 378.1 L803.9 378.1 L804.6 374.5 L805.3 377.6 L805.9 374.7 L806.6 370.9 L807.3 378.7 L808.0 374.8 L808.7 360.7 L809.4 361.6 L810.1 376.3 L810.8 371.0 L811.5 378.3 L812.2 375.5 L812.9 371.7 L813.6 376.5 L814.3 349.0 L815.0 355.0 L815.6 357.2 L816.3 357.4 L817.0 372.5 L817.7 374.9 L818.4 376.4 L819.1 371.3 L819.8 363.5 L820.5 342.3 L821.2 349.6 L821.9 377.5 L822.6 374.6 L823.3 373.2 L824.0 378.7 L824.7 378.5 L825.3 373.5 L826.0 367.1 L826.7 367.3 L827.4 373.8 L828.1 378.6 L828.8 378.1 L829.5 372.5 L830.2 376.9 L830.9 376.3 L831.6 363.4 L832.3 364.2 L833.0 378.5 L833.7 371.6 L834.4 374.5 L835.0 374.7 L835.7 373.1 L836.4 377.7 L837.1 368.3 L837.8 368.7 L838.5 375.9 L839.2 375.1 L839.9 374.6 L840.6 378.1 L841.3 378.6 L842.0 372.2 L842.7 375.6 L843.4 377.8 L844.1 363.2 L844.7 365.2 L845.4 345.0 L846.1 351.8 L846.8 374.5 L847.5 375.1 L848.2 373.7 L848.9 377.8 L849.6 378.2 L850.3 366.6 L851.0 369.0 L851.7 376.9 L852.4 373.4 L853.1 376.0 L853.8 378.2 L854.4 365.6 L855.1 367.2 L855.8 374.5 L856.5 373.3 L857.2 376.2 L857.9 378.5 L858.6 373.3 L859.3 361.4 L860.0 364.5 L860.7 374.0 L861.4 378.5 L862.1 378.3 L862.8 373.9 L863.5 374.6 L864.1 378.0 L864.8 358.7 L865.5 359.4 L866.2 377.3 L866.9 336.4 L867.6 344.9 L868.3 375.9 L869.0 373.0 L869.7 368.0 L870.4 370.2 L871.1 371.3 L871.8 376.6 L872.5 378.0 L873.2 378.7 L873.8 378.7 L874.5 378.7 L875.2 378.7 L875.9 378.7 L876.6 376.3 L877.3 372.1 L878.0 378.7 L878.7 376.6 L879.4 373.2 L880.1 361.0 L880.8 363.6 L881.5 371.5 L882.2 378.3 L882.9 375.4 L883.5 374.6 L884.2 363.6 L884.9 364.7 L885.6 373.4 L886.3 377.9 L887.0 377.6 L887.7 372.0 L888.4 376.9 L889.1 326.0 L889.8 336.6 L890.5 378.4 L891.2 378.3 L891.9 372.6 L892.6 378.6 L893.2 378.5 L893.9 374.7 L894.6 358.5 L895.3 360.8 L896.0 372.5 L896.7 376.1 L897.4 375.5 L898.1 371.9 L898.8 365.8 L899.5 366.1 L900.2 375.0 L900.9 375.6 L901.6 374.8 L902.3 373.2 L902.9 378.1 L903.6 377.6 L904.3 371.5 L905.0 375.0 L905.7 359.0 L906.4 362.8 L907.1 378.4 L907.8 377.5 L908.5 372.3 L909.2 376.3 L909.9 378.1 L910.6 374.7 L911.3 378.4 L912.0 358.7 L912.6 360.2 L913.3 376.6 L914.0 378.3 L914.7 371.9 L915.4 377.7 L916.1 377.2 L916.8 374.9 L917.5 357.6 L918.2 359.5 L918.9 372.2 L919.6 332.5 L920.3 341.8 L921.0 372.2 L921.7 377.4 L922.3 361.6 L923.0 364.0 L923.7 375.4 L924.4 378.0 L925.1 373.9 L925.8 347.2 L926.5 353.6 L927.2 375.0 L927.9 362.3 L928.6 364.1 L929.3 371.1 L930.0 376.7 L930.7 374.9 L931.4 370.6 L932.0 375.7 L932.7 376.0 L933.4 373.1 L934.1 359.5 L934.8 363.1 L935.5 373.2 L936.2 378.1 L936.9 378.7 L937.6 374.2 L938.3 378.2 L939.0 378.5 L939.7 373.4 L940.4 375.0 L941.1 366.5 L941.7 368.5 L942.4 375.8 L943.1 352.0 L943.8 357.4 L944.5 376.8 L945.2 376.9 L945.9 373.0 L946.6 366.8 L947.3 368.9 L948.0 373.7 L948.7 375.2 L949.4 377.7 L950.1 374.1 L950.8 375.3 L951.4 376.5 L952.1 362.8 L952.8 364.2 L953.5 377.3 L954.2 373.3 L954.9 376.7 L955.6 376.1 L956.3 373.7 L957.0 377.4 L957.7 362.2 L958.4 363.6 L959.1 378.3 L959.8 354.5 L960.5 359.4 L961.1 374.5 L961.8 361.1 L962.5 363.2 L963.2 376.7 L963.9 377.7 L964.6 371.6 L965.3 377.9 L966.0 378.2 L966.7 371.6 L967.4 375.5 L968.1 378.1 L968.8 362.1 L969.5 362.9 L970.2 375.6 L970.8 371.5 L971.5 377.5 L972.2 378.7 L972.9 370.9 L973.6 378.2 L974.3 375.5 L975.0 357.2 L975.7 361.0 L976.4 377.1 L977.1 371.3 L977.8 352.0 L978.5 357.4 L979.2 372.2 L979.9 375.0 L980.5 378.7 L981.2 373.4 L981.9 358.5 L982.6 359.1 L983.3 371.4 L984.0 349.0 L984.7 355.0 L985.4 372.9 L986.1 378.5 L986.8 362.3 L987.5 364.3 L988.2 378.7 L988.9 377.2 L989.6 372.3 L990.2 375.7 L990.9 375.9 L991.6 373.1 L992.3 377.6 L993.0 361.8 L993.7 362.5 L994.4 376.2 L995.1 374.7 L995.8 372.5 L996.5 376.4 L997.2 361.0 L997.9 361.9 L998.6 374.8 L999.3 376.1 L999.9 370.8 L1000.6 375.4 L1001.3 374.9 L1002.0 371.1 L1002.7 357.0 L1003.4 361.4 L1004.1 368.9 L1004.8 378.3 L1005.5 377.0 L1006.2 371.5 L1006.9 374.8 L1007.6 375.4 L1008.3 370.5 L1009.0 377.4 L1009.6 376.9 L1010.3 364.1 L1011.0 366.4 L1011.7 378.4 L1012.4 373.5 L1013.1 375.7 L1013.8 378.3 L1014.5 372.7 L1015.2 362.9 L1015.9 363.0 L1016.6 372.0 L1017.3 375.7 L1018.0 378.2 L1018.7 372.8 L1019.3 374.7 L1020.0 356.0 L1020.7 360.6 L1021.4 378.4 L1022.1 377.6 L1022.8 371.5 L1023.5 377.2 L1024.2 378.7 L1024.9 373.4 L1025.6 375.8 L1026.3 358.6 L1027.0 362.6 L1027.7 375.7 L1028.4 376.4 L1029.0 371.8 L1029.7 375.6 L1030.4 375.8 L1031.1 357.6 L1031.8 359.1 L1032.5 377.7 L1033.2 371.8 L1033.9 377.3 L1034.6 377.8 L1035.3 373.1 L1036.0 353.5 L1036.7 358.6 L1037.4 367.1 L1038.1 374.6 L1038.7 378.5 L1039.4 374.1 L1040.1 378.2 L1040.8 378.0 L1041.5 371.0 L1042.2 377.8 L1042.9 363.2 L1043.6 366.1 L1044.3 374.6 L1045.0 376.6 L1045.7 372.4 L1046.4 376.1 L1047.1 376.5 L1047.8 370.6 L1048.4 351.0 L1049.1 356.6 L1049.8 368.0 L1050.5 369.7 L1051.2 375.8 L1051.9 370.7 L1052.6 375.3 L1053.3 376.9 L1054.0 356.0 L1054.7 360.6 L1055.4 377.1 L1056.1 372.2 L1056.8 375.6 L1057.5 377.9 L1058.1 371.6 L1058.8 376.7 L1059.5 357.8 L1060.2 360.0 L1060.9 376.8 L1061.6 378.4 L1062.3 371.0 L1063.0 377.8 L1063.7 377.1 L1064.4 372.2 L1065.1 363.8 L1065.8 358.0 L1066.5 362.2 L1067.2 376.9 L1067.8 377.7 L1068.5 370.9 L1069.2 378.6 L1069.9 377.8 L1070.6 362.6 L1071.3 363.0 L1072.0 378.1 L1072.0 379.0 Z" fill="#1cc3e6" stroke="#1cc3e6" stroke-width="1.1" stroke-linejoin="round"/></g>
</svg>
<!--AX1-->
<div class="dot" style="left:1127.5px;top:139.1px;background:#0cc4e3"></div>
<div class="hs" style="top:506.4px"></div>

<div class="ph" style="top:532px"></div>
<svg class="abs" style="left:1150px;top:540.0px" width="16" height="14" viewBox="1150 96 16 14"><path d="M1155.0 104.0 A4.1 4.1 0 1 1 1157.0 106.9" fill="none" stroke="#7d7d7d" stroke-width="1.15"/><path d="M1152.2 103.1 L1157.3 103.1 L1154.4 105.9Z" fill="#7d7d7d"/></svg><svg class="abs" style="left:1175px;top:541.0px" width="12" height="12" viewBox="1175 97 12 12"><path d="M1178.9 99.1 H1184 V103.9Z" fill="#858585"/><path d="M1177.2 101.7 L1182.2 106.5 H1177.2Z" fill="#858585"/></svg>
<svg class="abs" style="left:75px;top:565px" width="1120" height="280" viewBox="75 565 1120 280">
<rect x="75" y="575.4" width="1041" height="1.1" fill="#ededed"/>
<rect x="75" y="602.9" width="1041" height="1.1" fill="#ededed"/>
<rect x="75" y="630.4" width="1041" height="1.1" fill="#ededed"/>
<rect x="75" y="657.9" width="1041" height="1.1" fill="#ededed"/>
<rect x="75" y="685.4" width="1041" height="1.1" fill="#ededed"/>
<rect x="75" y="712.9" width="1041" height="1.1" fill="#ededed"/>
<rect x="75" y="740.4" width="1041" height="1.1" fill="#ededed"/>
<rect x="75" y="767.9" width="1041" height="1.1" fill="#ededed"/>
<rect x="75" y="795.4" width="1041" height="1.1" fill="#ededed"/>
<rect x="75" y="822.9" width="1041" height="1.1" fill="#e4e4e4"/>
<rect x="153.8" y="823.7" width="1" height="3" fill="#e0e0e0"/>
<rect x="287.8" y="823.7" width="1" height="3" fill="#e0e0e0"/>
<rect x="421.8" y="823.7" width="1" height="3" fill="#e0e0e0"/>
<rect x="555.8" y="823.7" width="1" height="3" fill="#e0e0e0"/>
<rect x="689.8" y="823.7" width="1" height="3" fill="#e0e0e0"/>
<rect x="823.8" y="823.7" width="1" height="3" fill="#e0e0e0"/>
<rect x="957.8" y="823.7" width="1" height="3" fill="#e0e0e0"/>
<rect x="1091.8" y="823.7" width="1" height="3" fill="#e0e0e0"/>
<g opacity="0.72"><path d="M75.0 823.0 L75.0 821.6 L76.1 821.9 L77.2 814.9 L78.4 822.3 L79.5 821.5 L80.6 817.9 L81.7 822.7 L82.8 821.8 L84.0 820.9 L85.1 821.7 L86.2 820.4 L87.3 822.8 L88.4 787.0 L89.5 822.3 L90.7 822.2 L91.8 821.1 L92.9 821.1 L94.0 812.5 L95.1 822.1 L96.3 822.6 L97.4 820.3 L98.5 822.8 L99.6 823.0 L100.7 821.9 L101.9 816.5 L103.0 822.1 L104.1 818.4 L105.2 818.3 L106.3 823.0 L107.5 808.4 L108.6 820.0 L109.7 822.5 L110.8 820.6 L111.9 823.0 L113.0 821.9 L114.2 706.0 L115.3 820.6 L116.4 821.4 L117.5 821.8 L118.6 822.1 L119.8 821.1 L120.9 801.0 L122.0 822.1 L123.1 821.0 L124.2 817.2 L125.4 821.9 L126.5 821.7 L127.6 823.0 L128.7 821.0 L129.8 822.2 L131.0 820.8 L132.1 821.6 L133.2 820.8 L134.3 811.5 L135.4 821.9 L136.5 821.1 L137.7 820.6 L138.8 821.9 L139.9 820.4 L141.0 822.4 L142.1 819.5 L143.3 814.3 L144.4 820.5 L145.5 795.0 L146.6 819.9 L147.7 821.9 L148.9 817.5 L150.0 821.5 L151.1 821.0 L152.2 823.0 L153.3 820.9 L154.5 821.0 L155.6 787.0 L156.7 822.1 L157.8 820.6 L158.9 821.0 L160.0 815.9 L161.2 820.9 L162.3 819.9 L163.4 822.5 L164.5 815.0 L165.6 821.1 L166.8 818.9 L167.9 821.7 L169.0 820.2 L170.1 821.8 L171.2 822.3 L172.4 821.6 L173.5 805.0 L174.6 815.8 L175.7 819.9 L176.8 823.0 L177.9 822.6 L179.1 822.2 L180.2 801.0 L181.3 822.7 L182.4 821.4 L183.5 822.0 L184.7 822.2 L185.8 821.5 L186.9 814.1 L188.0 821.6 L189.1 820.5 L190.3 822.8 L191.4 820.9 L192.5 821.4 L193.6 821.1 L194.7 816.3 L195.9 822.1 L197.0 821.8 L198.1 801.0 L199.2 811.5 L200.3 822.8 L201.4 821.8 L202.6 801.0 L203.7 821.1 L204.8 820.9 L205.9 822.6 L207.0 819.6 L208.2 821.8 L209.3 820.4 L210.4 801.0 L211.5 819.3 L212.6 815.5 L213.8 820.8 L214.9 822.2 L216.0 798.0 L217.1 821.0 L218.2 822.9 L219.4 822.5 L220.5 820.2 L221.6 822.8 L222.7 819.8 L223.8 814.8 L224.9 821.2 L226.1 822.4 L227.2 820.6 L228.3 821.7 L229.4 821.6 L230.5 808.0 L231.7 822.9 L232.8 823.0 L233.9 820.1 L235.0 808.7 L236.1 821.2 L237.3 821.7 L238.4 822.2 L239.5 801.0 L240.6 822.2 L241.7 813.4 L242.9 821.1 L244.0 821.0 L245.1 818.5 L246.2 821.3 L247.3 819.8 L248.4 821.7 L249.6 803.0 L250.7 822.0 L251.8 820.7 L252.9 821.9 L254.0 821.2 L255.2 808.2 L256.3 819.6 L257.4 821.3 L258.5 819.1 L259.6 820.9 L260.8 819.7 L261.9 822.1 L263.0 822.3 L264.1 822.8 L265.2 822.9 L266.4 810.2 L267.5 778.0 L268.6 820.8 L269.7 820.3 L270.8 821.6 L271.9 820.1 L273.1 822.6 L274.2 816.5 L275.3 819.2 L276.4 822.8 L277.5 822.8 L278.7 822.6 L279.8 801.0 L280.9 820.6 L282.0 821.8 L283.1 820.4 L284.3 816.3 L285.4 821.7 L286.5 822.1 L287.6 820.3 L288.7 821.7 L289.9 819.0 L291.0 821.4 L292.1 822.9 L293.2 803.1 L294.3 822.7 L295.4 822.0 L296.6 799.0 L297.7 822.0 L298.8 820.5 L299.9 810.1 L301.0 821.6 L302.2 821.6 L303.3 799.0 L304.4 821.7 L305.5 822.6 L306.6 806.5 L307.8 820.5 L308.9 822.9 L310.0 822.2 L311.1 820.0 L312.2 820.2 L313.4 821.2 L314.5 803.0 L315.6 821.3 L316.7 822.1 L317.8 819.6 L318.9 821.4 L320.1 822.2 L321.2 822.8 L322.3 821.8 L323.4 822.9 L324.5 814.0 L325.7 819.1 L326.8 821.1 L327.9 822.8 L329.0 822.0 L330.1 807.9 L331.3 821.2 L332.4 816.4 L333.5 797.0 L334.6 820.2 L335.7 822.1 L336.9 819.0 L338.0 821.2 L339.1 820.6 L340.2 822.9 L341.3 822.3 L342.4 821.7 L343.6 820.3 L344.7 822.8 L345.8 819.4 L346.9 821.2 L348.0 820.0 L349.2 819.2 L350.3 819.7 L351.4 787.0 L352.5 822.0 L353.6 821.6 L354.8 821.8 L355.9 821.2 L357.0 820.8 L358.1 809.7 L359.2 819.7 L360.4 821.1 L361.5 822.3 L362.6 799.0 L363.7 822.0 L364.8 815.8 L365.9 819.8 L367.1 821.0 L368.2 820.9 L369.3 787.0 L370.4 821.9 L371.5 820.9 L372.7 817.4 L373.8 822.5 L374.9 821.6 L376.0 821.3 L377.1 821.6 L378.3 822.0 L379.4 818.8 L380.5 817.1 L381.6 822.4 L382.7 801.0 L383.8 822.7 L385.0 822.4 L386.1 819.9 L387.2 808.5 L388.3 820.7 L389.4 821.3 L390.6 820.0 L391.7 819.0 L392.8 816.6 L393.9 822.9 L395.0 819.3 L396.2 813.3 L397.3 820.1 L398.4 822.5 L399.5 799.0 L400.6 822.5 L401.8 812.5 L402.9 821.8 L404.0 820.1 L405.1 603.0 L406.2 819.4 L407.3 822.2 L408.5 822.7 L409.6 822.6 L410.7 815.2 L411.8 820.6 L412.9 822.4 L414.1 822.7 L415.2 793.0 L416.3 808.3 L417.4 819.0 L418.5 820.8 L419.7 820.7 L420.8 793.0 L421.9 820.3 L423.0 822.8 L424.1 819.7 L425.3 822.5 L426.4 819.6 L427.5 806.0 L428.6 822.3 L429.7 821.9 L430.8 822.4 L432.0 821.1 L433.1 822.5 L434.2 821.8 L435.3 811.0 L436.4 822.9 L437.6 822.5 L438.7 821.2 L439.8 821.0 L440.9 818.8 L442.0 822.3 L443.2 821.4 L444.3 793.0 L445.4 815.2 L446.5 820.1 L447.6 822.7 L448.8 822.9 L449.9 821.3 L451.0 820.9 L452.1 815.7 L453.2 822.3 L454.3 822.0 L455.5 821.8 L456.6 822.7 L457.7 820.7 L458.8 822.6 L459.9 809.0 L461.1 822.0 L462.2 821.1 L463.3 816.6 L464.4 817.9 L465.5 821.1 L466.7 819.6 L467.8 821.6 L468.9 821.0 L470.0 822.9 L471.1 820.4 L472.3 819.0 L473.4 820.2 L474.5 807.0 L475.6 822.3 L476.7 818.5 L477.8 821.1 L479.0 822.9 L480.1 821.2 L481.2 822.6 L482.3 818.7 L483.4 822.8 L484.6 820.4 L485.7 813.8 L486.8 818.8 L487.9 821.5 L489.0 821.9 L490.2 822.7 L491.3 816.1 L492.4 822.6 L493.5 819.3 L494.6 823.0 L495.8 823.0 L496.9 821.8 L498.0 819.2 L499.1 813.6 L500.2 820.8 L501.3 822.6 L502.5 821.9 L503.6 814.1 L504.7 787.0 L505.8 821.2 L506.9 821.4 L508.1 822.8 L509.2 819.3 L510.3 822.4 L511.4 822.4 L512.5 821.1 L513.7 787.0 L514.8 821.1 L515.9 821.2 L517.0 822.0 L518.1 813.2 L519.3 822.6 L520.4 819.2 L521.5 803.0 L522.6 821.2 L523.7 813.4 L524.8 822.6 L526.0 822.6 L527.1 821.3 L528.2 822.1 L529.3 818.5 L530.4 822.1 L531.6 819.9 L532.7 822.9 L533.8 822.7 L534.9 822.3 L536.0 817.8 L537.2 816.6 L538.3 822.1 L539.4 791.0 L540.5 821.0 L541.6 822.6 L542.8 821.4 L543.9 821.5 L545.0 817.2 L546.1 817.7 L547.2 819.7 L548.3 822.6 L549.5 820.3 L550.6 820.8 L551.7 822.5 L552.8 822.8 L553.9 820.4 L555.1 822.6 L556.2 805.0 L557.3 815.8 L558.4 822.7 L559.5 809.0 L560.7 821.2 L561.8 821.1 L562.9 818.7 L564.0 814.4 L565.1 819.5 L566.3 822.3 L567.4 820.8 L568.5 822.4 L569.6 822.7 L570.7 822.4 L571.8 822.3 L573.0 822.4 L574.1 821.1 L575.2 811.0 L576.3 820.9 L577.4 812.5 L578.6 822.2 L579.7 821.3 L580.8 822.7 L581.9 820.1 L583.0 822.9 L584.2 821.3 L585.3 817.6 L586.4 821.9 L587.5 822.5 L588.6 822.8 L589.7 822.1 L590.9 822.8 L592.0 820.3 L593.1 787.0 L594.2 822.2 L595.3 817.0 L596.5 805.0 L597.6 822.6 L598.7 818.7 L599.8 822.7 L600.9 818.7 L602.1 822.6 L603.2 818.0 L604.3 823.0 L605.4 821.3 L606.5 821.9 L607.7 820.9 L608.8 821.4 L609.9 822.6 L611.0 821.6 L612.1 820.2 L613.2 814.8 L614.4 820.7 L615.5 809.0 L616.6 822.7 L617.7 821.5 L618.8 822.1 L620.0 822.2 L621.1 813.8 L622.2 822.4 L623.3 821.1 L624.4 821.2 L625.6 819.2 L626.7 822.7 L627.8 819.3 L628.9 822.6 L630.0 812.4 L631.2 798.0 L632.3 822.1 L633.4 822.7 L634.5 821.1 L635.6 822.2 L636.7 813.6 L637.9 822.6 L639.0 818.8 L640.1 787.0 L641.2 817.1 L642.3 822.5 L643.5 822.5 L644.6 822.2 L645.7 818.7 L646.8 793.0 L647.9 820.3 L649.1 822.6 L650.2 801.0 L651.3 821.3 L652.4 814.4 L653.5 821.1 L654.7 818.9 L655.8 822.9 L656.9 821.6 L658.0 821.4 L659.1 813.0 L660.2 822.9 L661.4 821.0 L662.5 821.3 L663.6 817.9 L664.7 822.8 L665.8 818.6 L667.0 822.3 L668.1 821.7 L669.2 822.6 L670.3 821.6 L671.4 816.1 L672.6 818.4 L673.7 795.0 L674.8 819.4 L675.9 822.4 L677.0 821.1 L678.2 822.3 L679.3 820.8 L680.4 822.6 L681.5 817.7 L682.6 820.2 L683.7 822.9 L684.9 820.8 L686.0 822.5 L687.1 816.9 L688.2 820.2 L689.3 821.8 L690.5 807.0 L691.6 821.6 L692.7 819.2 L693.8 822.6 L694.9 821.4 L696.1 813.0 L697.2 822.1 L698.3 822.0 L699.4 821.0 L700.5 821.8 L701.7 819.5 L702.8 822.0 L703.9 812.2 L705.0 822.7 L706.1 820.9 L707.2 799.0 L708.4 821.1 L709.5 821.9 L710.6 821.2 L711.7 820.2 L712.8 820.8 L714.0 822.8 L715.1 748.0 L716.2 822.5 L717.3 821.1 L718.4 822.6 L719.6 822.8 L720.7 820.8 L721.8 821.1 L722.9 822.6 L724.0 821.2 L725.2 814.2 L726.3 822.5 L727.4 821.7 L728.5 820.5 L729.6 821.6 L730.7 821.0 L731.9 822.0 L733.0 821.0 L734.1 776.0 L735.2 818.6 L736.3 821.5 L737.5 822.2 L738.6 821.1 L739.7 818.6 L740.8 821.4 L741.9 821.0 L743.1 815.4 L744.2 821.5 L745.3 822.1 L746.4 822.4 L747.5 822.5 L748.7 819.7 L749.8 791.0 L750.9 820.2 L752.0 815.9 L753.1 821.0 L754.2 821.9 L755.4 822.9 L756.5 817.6 L757.6 820.8 L758.7 822.0 L759.8 809.0 L761.0 822.2 L762.1 819.1 L763.2 822.6 L764.3 821.4 L765.4 821.2 L766.6 822.7 L767.7 812.8 L768.8 816.3 L769.9 711.0 L771.0 820.5 L772.2 821.1 L773.3 821.0 L774.4 822.0 L775.5 818.8 L776.6 821.1 L777.7 821.8 L778.9 822.0 L780.0 809.0 L781.1 821.2 L782.2 817.1 L783.3 822.5 L784.5 821.3 L785.6 822.3 L786.7 814.1 L787.8 821.9 L788.9 820.9 L790.1 822.6 L791.2 807.0 L792.3 822.2 L793.4 820.2 L794.5 822.0 L795.6 822.9 L796.8 821.8 L797.9 817.4 L799.0 787.0 L800.1 819.1 L801.2 821.7 L802.4 822.2 L803.5 820.9 L804.6 822.9 L805.7 822.6 L806.8 822.8 L808.0 813.2 L809.1 820.9 L810.2 822.8 L811.3 820.5 L812.4 822.7 L813.6 817.9 L814.7 822.1 L815.8 805.0 L816.9 821.6 L818.0 821.5 L819.1 814.2 L820.3 819.3 L821.4 801.0 L822.5 822.4 L823.6 819.1 L824.7 807.7 L825.9 821.5 L827.0 818.8 L828.1 822.3 L829.2 822.7 L830.3 812.6 L831.5 821.9 L832.6 821.2 L833.7 820.9 L834.8 811.0 L835.9 821.6 L837.1 821.2 L838.2 819.6 L839.3 821.3 L840.4 822.1 L841.5 814.2 L842.6 820.5 L843.8 821.2 L844.9 822.0 L846.0 818.0 L847.1 819.8 L848.2 821.3 L849.4 803.0 L850.5 821.5 L851.6 816.0 L852.7 820.9 L853.8 820.5 L855.0 821.7 L856.1 820.7 L857.2 820.5 L858.3 817.3 L859.4 819.8 L860.6 821.7 L861.7 822.4 L862.8 821.0 L863.9 819.8 L865.0 818.9 L866.1 822.7 L867.3 803.0 L868.4 822.5 L869.5 819.9 L870.6 822.2 L871.7 822.4 L872.9 803.0 L874.0 820.9 L875.1 822.3 L876.2 804.3 L877.3 821.1 L878.5 822.9 L879.6 818.7 L880.7 821.3 L881.8 822.8 L882.9 819.7 L884.1 816.8 L885.2 811.0 L886.3 819.1 L887.4 820.4 L888.5 817.5 L889.6 805.4 L890.8 821.9 L891.9 821.7 L893.0 820.9 L894.1 818.5 L895.2 822.8 L896.4 803.0 L897.5 821.9 L898.6 821.2 L899.7 822.9 L900.8 809.6 L902.0 822.8 L903.1 820.2 L904.2 821.9 L905.3 821.0 L906.4 822.6 L907.6 822.4 L908.7 808.0 L909.8 819.6 L910.9 816.1 L912.0 819.2 L913.1 821.3 L914.3 805.0 L915.4 822.5 L916.5 809.8 L917.6 822.9 L918.7 819.3 L919.9 805.0 L921.0 820.6 L922.1 822.7 L923.2 818.5 L924.3 822.7 L925.5 819.8 L926.6 817.2 L927.7 820.9 L928.8 822.7 L929.9 809.0 L931.1 822.2 L932.2 818.6 L933.3 815.9 L934.4 819.6 L935.5 822.5 L936.6 822.4 L937.8 814.1 L938.9 819.7 L940.0 822.8 L941.1 821.7 L942.2 787.0 L943.4 820.8 L944.5 821.5 L945.6 819.7 L946.7 814.5 L947.8 818.5 L949.0 822.9 L950.1 818.7 L951.2 821.1 L952.3 822.4 L953.4 822.6 L954.6 807.0 L955.7 822.0 L956.8 818.9 L957.9 821.1 L959.0 818.4 L960.1 822.6 L961.3 819.6 L962.4 820.9 L963.5 819.3 L964.6 821.8 L965.7 808.9 L966.9 821.5 L968.0 793.0 L969.1 822.9 L970.2 822.9 L971.3 822.9 L972.5 820.4 L973.6 821.7 L974.7 809.0 L975.8 822.8 L976.9 817.6 L978.1 822.3 L979.2 818.6 L980.3 821.5 L981.4 819.3 L982.5 822.5 L983.6 822.5 L984.8 822.0 L985.9 816.0 L987.0 822.0 L988.1 818.5 L989.2 820.9 L990.4 816.3 L991.5 822.6 L992.6 787.0 L993.7 822.7 L994.8 820.3 L996.0 821.1 L997.1 821.6 L998.2 822.2 L999.3 822.4 L1000.4 822.2 L1001.5 816.1 L1002.7 805.0 L1003.8 822.8 L1004.9 822.9 L1006.0 819.6 L1007.1 822.0 L1008.3 819.4 L1009.4 822.8 L1010.5 813.5 L1011.6 820.9 L1012.7 820.1 L1013.9 820.9 L1015.0 809.0 L1016.1 822.7 L1017.2 822.8 L1018.3 815.5 L1019.5 821.2 L1020.6 819.8 L1021.7 820.7 L1022.8 820.9 L1023.9 822.9 L1025.0 811.0 L1026.2 821.8 L1027.3 816.8 L1028.4 819.0 L1029.5 821.2 L1030.6 822.1 L1031.8 821.8 L1032.9 820.1 L1034.0 821.4 L1035.1 822.5 L1036.2 817.7 L1037.4 821.6 L1038.5 823.0 L1039.6 822.1 L1040.7 817.4 L1041.8 820.0 L1043.0 822.3 L1044.1 821.9 L1045.2 822.6 L1046.3 815.3 L1047.4 822.1 L1048.5 822.3 L1049.7 808.1 L1050.8 822.8 L1051.9 820.8 L1053.0 811.0 L1054.1 821.3 L1055.3 822.5 L1056.4 820.8 L1057.5 822.9 L1058.6 822.3 L1059.7 820.6 L1060.9 821.7 L1062.0 821.8 L1063.1 817.6 L1064.2 819.1 L1065.3 820.9 L1066.5 821.3 L1067.6 822.2 L1068.7 811.0 L1069.8 822.0 L1070.9 821.1 L1072.0 822.0 L1073.2 814.7 L1074.3 821.2 L1075.4 820.2 L1076.5 822.9 L1077.6 822.7 L1078.8 805.0 L1079.9 817.3 L1081.0 822.9 L1081.0 823.0 Z" fill="#1cc3e6" stroke="#1cc3e6" stroke-width="1.25" stroke-linejoin="round"/></g>
<g opacity="0.57"><path d="M75.0 823.0 L75.0 819.6 L76.1 821.9 L77.2 814.9 L78.4 822.3 L79.5 821.5 L80.6 820.8 L81.7 822.7 L82.8 821.8 L84.0 816.5 L85.1 821.7 L86.2 820.4 L87.3 822.8 L88.4 787.0 L89.5 822.3 L90.7 821.0 L91.8 821.1 L92.9 821.1 L94.0 812.5 L95.1 822.1 L96.3 822.6 L97.4 820.3 L98.5 822.1 L99.6 823.0 L100.7 821.9 L101.9 819.8 L103.0 822.1 L104.1 818.4 L105.2 821.1 L106.3 823.0 L107.5 808.4 L108.6 803.0 L109.7 821.7 L110.8 820.6 L111.9 823.0 L113.0 817.2 L114.2 822.2 L115.3 820.6 L116.4 821.4 L117.5 821.8 L118.6 822.1 L119.8 821.1 L120.9 801.0 L122.0 822.1 L123.1 821.0 L124.2 818.6 L125.4 821.9 L126.5 817.6 L127.6 823.0 L128.7 821.0 L129.8 811.0 L131.0 820.2 L132.1 821.6 L133.2 820.8 L134.3 812.5 L135.4 821.9 L136.5 822.3 L137.7 819.1 L138.8 821.5 L139.9 819.3 L141.0 822.1 L142.1 819.5 L143.3 814.3 L144.4 820.5 L145.5 795.0 L146.6 819.9 L147.7 821.9 L148.9 817.5 L150.0 821.5 L151.1 821.0 L152.2 823.0 L153.3 816.8 L154.5 821.0 L155.6 787.0 L156.7 821.6 L157.8 820.6 L158.9 821.0 L160.0 815.9 L161.2 820.9 L162.3 819.9 L163.4 822.5 L164.5 815.0 L165.6 821.1 L166.8 818.9 L167.9 821.7 L169.0 820.2 L170.1 821.8 L171.2 820.7 L172.4 821.3 L173.5 805.0 L174.6 815.8 L175.7 819.9 L176.8 823.0 L177.9 822.6 L179.1 822.2 L180.2 801.0 L181.3 821.3 L182.4 821.4 L183.5 822.0 L184.7 822.2 L185.8 821.1 L186.9 814.1 L188.0 821.1 L189.1 820.5 L190.3 822.8 L191.4 820.9 L192.5 821.4 L193.6 821.1 L194.7 816.3 L195.9 822.1 L197.0 821.8 L198.1 801.0 L199.2 813.9 L200.3 822.8 L201.4 821.8 L202.6 801.0 L203.7 821.1 L204.8 820.1 L205.9 822.5 L207.0 819.6 L208.2 821.8 L209.3 822.9 L210.4 801.0 L211.5 819.3 L212.6 815.5 L213.8 820.8 L214.9 821.2 L216.0 798.0 L217.1 821.0 L218.2 822.9 L219.4 822.5 L220.5 820.2 L221.6 822.8 L222.7 819.8 L223.8 814.8 L224.9 821.2 L226.1 821.8 L227.2 820.6 L228.3 811.0 L229.4 821.6 L230.5 822.6 L231.7 822.6 L232.8 822.8 L233.9 820.1 L235.0 808.7 L236.1 821.2 L237.3 821.7 L238.4 822.2 L239.5 801.0 L240.6 821.2 L241.7 813.4 L242.9 820.6 L244.0 821.0 L245.1 818.5 L246.2 821.3 L247.3 819.8 L248.4 821.7 L249.6 803.0 L250.7 822.0 L251.8 820.7 L252.9 821.9 L254.0 821.2 L255.2 808.2 L256.3 819.6 L257.4 821.3 L258.5 819.1 L259.6 820.9 L260.8 819.7 L261.9 822.1 L263.0 820.7 L264.1 822.8 L265.2 822.9 L266.4 810.2 L267.5 819.7 L268.6 820.8 L269.7 821.3 L270.8 821.6 L271.9 820.1 L273.1 822.6 L274.2 816.5 L275.3 821.9 L276.4 821.6 L277.5 821.7 L278.7 822.6 L279.8 801.0 L280.9 822.9 L282.0 821.8 L283.1 820.4 L284.3 816.3 L285.4 821.7 L286.5 822.1 L287.6 820.3 L288.7 821.7 L289.9 819.0 L291.0 821.4 L292.1 822.9 L293.2 806.5 L294.3 822.7 L295.4 822.0 L296.6 799.0 L297.7 822.0 L298.8 820.5 L299.9 813.3 L301.0 820.9 L302.2 821.6 L303.3 799.0 L304.4 821.7 L305.5 822.6 L306.6 806.5 L307.8 820.5 L308.9 822.9 L310.0 819.1 L311.1 787.0 L312.2 820.2 L313.4 821.2 L314.5 803.0 L315.6 821.3 L316.7 820.5 L317.8 821.6 L318.9 819.1 L320.1 822.2 L321.2 822.8 L322.3 821.8 L323.4 822.3 L324.5 814.0 L325.7 819.1 L326.8 821.1 L327.9 822.3 L329.0 822.0 L330.1 807.9 L331.3 821.2 L332.4 820.1 L333.5 797.0 L334.6 820.2 L335.7 822.1 L336.9 819.0 L338.0 821.2 L339.1 813.4 L340.2 822.9 L341.3 821.1 L342.4 821.7 L343.6 820.3 L344.7 822.8 L345.8 819.4 L346.9 821.2 L348.0 815.1 L349.2 822.3 L350.3 819.7 L351.4 787.0 L352.5 821.5 L353.6 821.2 L354.8 821.8 L355.9 821.2 L357.0 820.8 L358.1 809.7 L359.2 819.7 L360.4 821.1 L361.5 822.3 L362.6 799.0 L363.7 819.9 L364.8 815.8 L365.9 819.8 L367.1 821.0 L368.2 820.9 L369.3 787.0 L370.4 821.9 L371.5 820.9 L372.7 817.4 L373.8 822.5 L374.9 820.9 L376.0 821.3 L377.1 821.0 L378.3 822.0 L379.4 818.8 L380.5 817.1 L381.6 822.4 L382.7 801.0 L383.8 821.1 L385.0 822.4 L386.1 819.9 L387.2 808.5 L388.3 820.7 L389.4 821.3 L390.6 820.0 L391.7 820.9 L392.8 819.6 L393.9 822.9 L395.0 819.3 L396.2 813.3 L397.3 820.1 L398.4 822.5 L399.5 809.0 L400.6 822.5 L401.8 815.7 L402.9 821.8 L404.0 820.1 L405.1 822.3 L406.2 819.4 L407.3 822.2 L408.5 822.7 L409.6 822.6 L410.7 815.2 L411.8 822.9 L412.9 822.2 L414.1 822.7 L415.2 819.3 L416.3 808.3 L417.4 819.0 L418.5 820.8 L419.7 820.7 L420.8 822.0 L421.9 820.3 L423.0 822.8 L424.1 819.7 L425.3 822.5 L426.4 819.6 L427.5 806.0 L428.6 819.4 L429.7 821.9 L430.8 820.9 L432.0 821.1 L433.1 822.5 L434.2 821.8 L435.3 811.0 L436.4 822.7 L437.6 822.5 L438.7 821.2 L439.8 821.0 L440.9 822.6 L442.0 822.3 L443.2 821.4 L444.3 818.9 L445.4 815.2 L446.5 820.1 L447.6 822.7 L448.8 822.9 L449.9 821.3 L451.0 820.9 L452.1 806.5 L453.2 821.2 L454.3 822.0 L455.5 821.8 L456.6 822.0 L457.7 819.2 L458.8 821.7 L459.9 809.0 L461.1 822.0 L462.2 821.1 L463.3 816.6 L464.4 821.1 L465.5 821.1 L466.7 819.6 L467.8 821.6 L468.9 821.0 L470.0 822.7 L471.1 820.4 L472.3 817.0 L473.4 820.2 L474.5 807.0 L475.6 822.3 L476.7 820.9 L477.8 820.4 L479.0 822.6 L480.1 820.7 L481.2 822.6 L482.3 818.7 L483.4 822.8 L484.6 818.7 L485.7 813.8 L486.8 818.8 L487.9 821.5 L489.0 821.9 L490.2 822.4 L491.3 819.8 L492.4 822.6 L493.5 819.3 L494.6 822.8 L495.8 823.0 L496.9 821.8 L498.0 820.7 L499.1 813.6 L500.2 820.8 L501.3 822.0 L502.5 821.9 L503.6 814.1 L504.7 787.0 L505.8 821.2 L506.9 821.4 L508.1 821.7 L509.2 819.3 L510.3 822.4 L511.4 822.4 L512.5 821.1 L513.7 787.0 L514.8 821.1 L515.9 821.2 L517.0 822.0 L518.1 813.2 L519.3 822.6 L520.4 819.2 L521.5 803.0 L522.6 821.2 L523.7 813.4 L524.8 822.6 L526.0 822.6 L527.1 821.3 L528.2 822.1 L529.3 818.5 L530.4 821.9 L531.6 819.9 L532.7 822.9 L533.8 822.7 L534.9 822.3 L536.0 821.1 L537.2 816.6 L538.3 822.1 L539.4 822.5 L540.5 809.0 L541.6 822.6 L542.8 821.4 L543.9 821.0 L545.0 818.8 L546.1 817.7 L547.2 819.7 L548.3 822.6 L549.5 820.3 L550.6 820.8 L551.7 822.5 L552.8 822.8 L553.9 820.4 L555.1 822.6 L556.2 818.6 L557.3 815.8 L558.4 822.7 L559.5 809.0 L560.7 821.2 L561.8 821.1 L562.9 818.7 L564.0 814.4 L565.1 819.5 L566.3 822.3 L567.4 820.8 L568.5 822.4 L569.6 822.7 L570.7 822.4 L571.8 820.1 L573.0 822.4 L574.1 821.1 L575.2 811.0 L576.3 820.9 L577.4 812.5 L578.6 820.9 L579.7 821.3 L580.8 822.7 L581.9 821.9 L583.0 822.5 L584.2 821.3 L585.3 814.9 L586.4 821.9 L587.5 822.3 L588.6 822.7 L589.7 820.1 L590.9 821.4 L592.0 820.3 L593.1 787.0 L594.2 822.2 L595.3 811.8 L596.5 805.0 L597.6 822.4 L598.7 818.7 L599.8 822.7 L600.9 820.2 L602.1 822.6 L603.2 816.6 L604.3 823.0 L605.4 821.3 L606.5 821.2 L607.7 816.4 L608.8 821.4 L609.9 820.9 L611.0 821.6 L612.1 820.2 L613.2 814.8 L614.4 819.2 L615.5 809.0 L616.6 822.3 L617.7 821.5 L618.8 822.1 L620.0 822.2 L621.1 813.8 L622.2 822.4 L623.3 820.3 L624.4 821.2 L625.6 819.2 L626.7 821.2 L627.8 819.3 L628.9 822.6 L630.0 812.4 L631.2 798.0 L632.3 822.1 L633.4 822.7 L634.5 821.1 L635.6 822.2 L636.7 809.6 L637.9 822.6 L639.0 818.8 L640.1 787.0 L641.2 817.1 L642.3 822.5 L643.5 822.0 L644.6 821.0 L645.7 818.7 L646.8 821.7 L647.9 820.3 L649.1 822.6 L650.2 801.0 L651.3 821.3 L652.4 816.0 L653.5 821.1 L654.7 818.9 L655.8 822.9 L656.9 821.6 L658.0 820.9 L659.1 813.0 L660.2 822.9 L661.4 821.0 L662.5 821.3 L663.6 817.9 L664.7 822.2 L665.8 818.6 L667.0 822.3 L668.1 821.2 L669.2 821.9 L670.3 821.6 L671.4 816.1 L672.6 818.4 L673.7 795.0 L674.8 819.4 L675.9 822.4 L677.0 821.1 L678.2 822.3 L679.3 820.8 L680.4 822.6 L681.5 817.7 L682.6 821.8 L683.7 822.3 L684.9 820.8 L686.0 822.5 L687.1 816.9 L688.2 818.6 L689.3 821.8 L690.5 807.0 L691.6 821.6 L692.7 819.2 L693.8 820.9 L694.9 821.4 L696.1 813.0 L697.2 821.1 L698.3 822.0 L699.4 821.0 L700.5 809.0 L701.7 819.5 L702.8 822.0 L703.9 812.2 L705.0 822.6 L706.1 820.9 L707.2 799.0 L708.4 821.1 L709.5 821.9 L710.6 821.2 L711.7 821.9 L712.8 820.0 L714.0 822.8 L715.1 787.0 L716.2 820.9 L717.3 812.4 L718.4 822.6 L719.6 821.6 L720.7 820.8 L721.8 821.1 L722.9 822.6 L724.0 821.2 L725.2 814.2 L726.3 820.6 L727.4 821.7 L728.5 820.5 L729.6 821.6 L730.7 821.0 L731.9 821.4 L733.0 821.0 L734.1 814.3 L735.2 818.6 L736.3 821.5 L737.5 820.4 L738.6 821.1 L739.7 818.6 L740.8 821.4 L741.9 821.0 L743.1 815.4 L744.2 821.5 L745.3 822.1 L746.4 822.4 L747.5 822.2 L748.7 819.7 L749.8 791.0 L750.9 820.2 L752.0 815.9 L753.1 821.0 L754.2 821.9 L755.4 822.9 L756.5 813.3 L757.6 820.8 L758.7 822.0 L759.8 809.0 L761.0 822.2 L762.1 819.1 L763.2 822.6 L764.3 821.4 L765.4 821.2 L766.6 822.7 L767.7 812.8 L768.8 819.6 L769.9 822.8 L771.0 820.5 L772.2 816.1 L773.3 821.0 L774.4 822.0 L775.5 818.8 L776.6 821.1 L777.7 821.8 L778.9 821.7 L780.0 809.0 L781.1 821.2 L782.2 817.1 L783.3 821.9 L784.5 821.3 L785.6 822.3 L786.7 814.1 L787.8 821.9 L788.9 820.9 L790.1 821.9 L791.2 807.0 L792.3 822.2 L793.4 820.2 L794.5 822.0 L795.6 822.9 L796.8 821.8 L797.9 817.4 L799.0 787.0 L800.1 819.1 L801.2 821.7 L802.4 822.2 L803.5 820.9 L804.6 822.5 L805.7 822.6 L806.8 822.2 L808.0 813.2 L809.1 820.9 L810.2 822.8 L811.3 820.5 L812.4 822.7 L813.6 820.4 L814.7 822.1 L815.8 805.0 L816.9 821.6 L818.0 819.7 L819.1 814.2 L820.3 819.3 L821.4 801.0 L822.5 822.0 L823.6 821.2 L824.7 807.7 L825.9 821.5 L827.0 818.8 L828.1 822.3 L829.2 822.7 L830.3 812.6 L831.5 821.9 L832.6 821.2 L833.7 819.7 L834.8 811.0 L835.9 821.6 L837.1 821.2 L838.2 819.6 L839.3 821.3 L840.4 822.1 L841.5 814.2 L842.6 820.5 L843.8 821.2 L844.9 822.0 L846.0 821.8 L847.1 819.8 L848.2 821.3 L849.4 803.0 L850.5 821.5 L851.6 816.0 L852.7 820.9 L853.8 820.5 L855.0 820.8 L856.1 820.7 L857.2 822.6 L858.3 817.3 L859.4 821.2 L860.6 820.7 L861.7 822.4 L862.8 821.0 L863.9 821.3 L865.0 818.9 L866.1 822.7 L867.3 803.0 L868.4 822.1 L869.5 819.9 L870.6 822.2 L871.7 822.4 L872.9 803.0 L874.0 819.6 L875.1 822.3 L876.2 806.2 L877.3 821.1 L878.5 822.9 L879.6 821.7 L880.7 821.3 L881.8 822.8 L882.9 819.7 L884.1 816.8 L885.2 811.0 L886.3 821.8 L887.4 820.4 L888.5 821.5 L889.6 806.4 L890.8 821.9 L891.9 821.7 L893.0 820.9 L894.1 818.5 L895.2 822.8 L896.4 803.0 L897.5 821.9 L898.6 821.2 L899.7 822.9 L900.8 809.6 L902.0 822.1 L903.1 820.2 L904.2 821.9 L905.3 821.0 L906.4 822.6 L907.6 820.6 L908.7 808.0 L909.8 819.6 L910.9 816.1 L912.0 819.2 L913.1 821.3 L914.3 805.0 L915.4 822.5 L916.5 809.8 L917.6 822.8 L918.7 819.3 L919.9 805.0 L921.0 821.8 L922.1 820.9 L923.2 818.5 L924.3 822.7 L925.5 819.8 L926.6 817.2 L927.7 820.9 L928.8 822.7 L929.9 809.0 L931.1 822.2 L932.2 818.6 L933.3 815.9 L934.4 819.6 L935.5 821.9 L936.6 822.4 L937.8 817.9 L938.9 822.6 L940.0 822.8 L941.1 821.7 L942.2 787.0 L943.4 820.8 L944.5 821.5 L945.6 819.7 L946.7 815.6 L947.8 818.5 L949.0 822.9 L950.1 820.7 L951.2 821.1 L952.3 822.4 L953.4 822.6 L954.6 807.0 L955.7 822.0 L956.8 822.5 L957.9 821.1 L959.0 818.4 L960.1 809.0 L961.3 819.6 L962.4 820.9 L963.5 819.3 L964.6 821.8 L965.7 808.9 L966.9 821.5 L968.0 818.8 L969.1 822.9 L970.2 822.9 L971.3 822.9 L972.5 820.4 L973.6 821.7 L974.7 809.0 L975.8 822.8 L976.9 817.6 L978.1 822.3 L979.2 818.6 L980.3 821.5 L981.4 819.3 L982.5 822.5 L983.6 820.4 L984.8 822.0 L985.9 818.9 L987.0 822.0 L988.1 822.1 L989.2 787.0 L990.4 816.3 L991.5 822.6 L992.6 787.0 L993.7 822.7 L994.8 818.8 L996.0 821.1 L997.1 821.6 L998.2 822.2 L999.3 820.7 L1000.4 821.6 L1001.5 816.1 L1002.7 805.0 L1003.8 822.8 L1004.9 822.9 L1006.0 819.6 L1007.1 822.0 L1008.3 820.6 L1009.4 822.8 L1010.5 813.5 L1011.6 820.9 L1012.7 820.1 L1013.9 820.9 L1015.0 809.0 L1016.1 822.5 L1017.2 822.8 L1018.3 815.5 L1019.5 821.2 L1020.6 822.6 L1021.7 818.5 L1022.8 820.9 L1023.9 822.9 L1025.0 811.0 L1026.2 820.5 L1027.3 815.2 L1028.4 819.0 L1029.5 821.2 L1030.6 822.1 L1031.8 821.8 L1032.9 820.1 L1034.0 821.4 L1035.1 822.5 L1036.2 821.4 L1037.4 821.6 L1038.5 823.0 L1039.6 787.0 L1040.7 817.4 L1041.8 820.0 L1043.0 822.3 L1044.1 820.3 L1045.2 822.0 L1046.3 818.7 L1047.4 822.1 L1048.5 822.3 L1049.7 808.1 L1050.8 822.5 L1051.9 820.8 L1053.0 811.0 L1054.1 821.3 L1055.3 822.5 L1056.4 820.8 L1057.5 822.9 L1058.6 821.2 L1059.7 819.2 L1060.9 821.7 L1062.0 821.8 L1063.1 811.2 L1064.2 819.1 L1065.3 820.9 L1066.5 821.3 L1067.6 821.9 L1068.7 811.0 L1069.8 822.0 L1070.9 821.1 L1072.0 822.0 L1073.2 814.7 L1074.3 821.2 L1075.4 820.2 L1076.5 822.9 L1077.6 822.7 L1078.8 805.0 L1079.9 817.3 L1081.0 822.9 L1081.0 823.0 Z" fill="#f7a035" stroke="#f7a035" stroke-width="1.25" stroke-linejoin="round"/></g>
</svg>
<!--AX2-->
<div class="dot" style="left:1139px;top:582.8px;background:#0cc4e3"></div>
<div class="dot" style="left:1139px;top:602.4px;background:#f8a43c"></div>
<div class="hs" style="top:950.3px"></div>

<div class="ph" style="top:976px"></div>
<div class="sel" style="left:955px;top:982.5px;width:64px"><i class="abs" style="left:39px;top:0;width:1px;height:18px;background:#dadada"></i><svg class="abs" style="left:47px;top:5.5px" width="8" height="6"><path d="M0.6 0.6 H7.4 L4 5.6Z" fill="#7a7a7a"/></svg></div>
<div class="abs" style="left:1105.5px;top:981.5px;width:35.5px;height:19px;border-radius:9.5px;background:#3fb870"></div>
<div class="abs" style="left:1122.6px;top:981.4px;width:19px;height:19px;border-radius:50%;background:#fff;border:1px solid #dcdcdc;box-shadow:0 1px 1.5px rgba(0,0,0,.18)"></div>
<svg class="abs" style="left:1150px;top:984.0px" width="16" height="14" viewBox="1150 96 16 14"><path d="M1155.0 104.0 A4.1 4.1 0 1 1 1157.0 106.9" fill="none" stroke="#7d7d7d" stroke-width="1.15"/><path d="M1152.2 103.1 L1157.3 103.1 L1154.4 105.9Z" fill="#7d7d7d"/></svg><svg class="abs" style="left:1175px;top:985.0px" width="12" height="12" viewBox="1175 97 12 12"><path d="M1178.9 99.1 H1184 V103.9Z" fill="#858585"/><path d="M1177.2 101.7 L1182.2 106.5 H1177.2Z" fill="#858585"/></svg>
<div class="abs" style="left:75px;top:1008px;width:1121px;height:32px;background:#fbfbfb"></div>
<svg class="abs" style="left:117px;top:1024px" width="6" height="9" viewBox="0 0 6 9"><path d="M3 0.6 L5.6 3.6 H0.4Z" fill="#c4c4c4"/><path d="M3 8.2 L5.6 5.2 H0.4Z" fill="#e4e4e4"/></svg>
<div class="rl" style="top:1039px;height:2px;background:#e4e4e4"></div>
<div class="rl" style="top:1074.8px"></div>
<div class="rl" style="top:1100.9px"></div>
<div class="rl" style="top:1141.8px"></div>
<div class="rl" style="top:1182.2px"></div>

<div id="tl" style="position:absolute;left:0;top:0;width:1226px;height:1200px;will-change:transform">
<div class="t" style="left:74.0px;top:8px;font-size:20px;color:#3a3a3a;font-family:'Liberation Serif',serif;letter-spacing:0.11px;">OpManager</div>
<div class="t" style="left:184.0px;top:21px;font-size:9.5px;color:#9a9a9a;letter-spacing:-0.04px;">System Performance</div>
<div class="t" style="left:90.5px;top:51px;font-size:13.5px;color:#222;font-weight:bold;letter-spacing:-0.64px;">https</div>
<div class="t" style="left:150.4px;top:48px;font-size:10.5px;color:#8a8a8a;letter-spacing:0.20px;">Last 24 hours</div>
<div class="t" style="left:150.0px;top:64px;font-size:10px;color:#8a8a8a;letter-spacing:-0.01px;">2017-08-17 11:24 to 2017-08-18 11:24</div>
<div class="t" style="left:90.6px;top:98px;font-size:13.5px;color:#222;font-weight:bold;letter-spacing:-0.49px;">Traffic</div>
<div class="t" style="left:90.3px;top:542px;font-size:13.5px;color:#222;font-weight:bold;letter-spacing:-0.95px;">Response Time</div>
<div class="t" style="left:90.3px;top:986px;font-size:13.5px;color:#222;font-weight:bold;letter-spacing:-0.80px;">Top Conversation</div>
<div class="t" style="left:916.1px;top:99px;font-size:11.5px;color:#222;font-weight:bold;letter-spacing:-0.58px;">Type</div>
<div class="t" style="left:952.6px;top:100px;font-size:11px;color:#444;letter-spacing:-0.36px;">Speed</div>
<div class="t" style="left:1030.2px;top:99px;font-size:11.5px;color:#222;font-weight:bold;letter-spacing:-0.44px;">Data Points</div>
<div class="t" style="left:1101.2px;top:100px;font-size:11px;color:#444;">1</div>
<div class="t" style="left:902.5px;top:986px;font-size:11.5px;color:#222;font-weight:bold;letter-spacing:-0.61px;">Group By</div>
<div class="t" style="left:962.6px;top:988px;font-size:11px;color:#444;letter-spacing:0.18px;">None</div>
<div class="t" style="left:1032.5px;top:985px;font-size:13px;color:#333;letter-spacing:-0.88px;">Resolve DNS</div>
<div class="t" style="left:1143.3px;top:139px;font-size:12px;color:#555;letter-spacing:0.55px;">Traffic</div>
<div class="t" style="left:1154.1px;top:583px;font-size:12px;color:#555;letter-spacing:0.13px;">ART</div>
<div class="t" style="left:1154.6px;top:603px;font-size:12px;color:#555;letter-spacing:0.12px;">NRT</div>
<div class="t" style="left:5.4px;top:75px;font-size:10px;color:#a9a9a9;letter-spacing:-0.27px;">Dashboard</div>
<div class="t" style="left:7.8px;top:126px;font-size:10px;color:#fff;font-weight:bold;letter-spacing:-0.40px;">Inventory</div>
<div class="t" style="left:13.7px;top:177px;font-size:10px;color:#a9a9a9;letter-spacing:-0.25px;">Alarms</div>
<div class="t" style="left:16.6px;top:228px;font-size:10px;color:#a9a9a9;letter-spacing:-0.24px;">Maps</div>
<div class="t" style="left:6.9px;top:280px;font-size:10px;color:#a9a9a9;letter-spacing:0.26px;">Workflow</div>
<div class="t" style="left:3.4px;top:331px;font-size:10px;color:#a9a9a9;letter-spacing:-0.17px;">Group Chat</div>
<div class="t" style="left:11.1px;top:1129px;font-size:10px;color:#a9a9a9;letter-spacing:-0.07px;">Reports</div>
<div class="t" style="left:11.5px;top:1179px;font-size:10px;color:#a9a9a9;letter-spacing:-0.24px;">Settings</div>
<div class="t" style="left:79.6px;top:1020px;font-size:11px;color:#333;letter-spacing:-0.11px;">Source</div>
<div class="t" style="left:186.3px;top:1020px;font-size:11px;color:#333;letter-spacing:0.29px;">Destination</div>
<div class="t" style="left:290.0px;top:1020px;font-size:11px;color:#333;letter-spacing:-0.14px;">URL</div>
<div class="t" style="left:464.3px;top:1020px;font-size:11px;color:#333;letter-spacing:0.26px;">Application</div>
<div class="t" style="left:568.0px;top:1020px;font-size:11px;color:#333;letter-spacing:0.03px;">Src Port</div>
<div class="t" style="left:636.8px;top:1020px;font-size:11px;color:#333;letter-spacing:0.17px;">Dst Port</div>
<div class="t" style="left:704.8px;top:1020px;font-size:11px;color:#333;letter-spacing:0.28px;">Protocol</div>
<div class="t" style="left:773.3px;top:1020px;font-size:11px;color:#333;letter-spacing:-0.14px;">Average NRT</div>
<div class="t" style="left:859.5px;top:1020px;font-size:11px;color:#333;letter-spacing:-0.08px;">Average ART</div>
<div class="t" style="left:946.0px;top:1020px;font-size:11px;color:#333;letter-spacing:0.15px;">Traffic</div>
<div class="t" style="left:1048.0px;top:1020px;font-size:11px;color:#333;letter-spacing:-0.16px;">Packets</div>
<div class="t" style="left:1116.5px;top:1020px;font-size:11px;color:#333;letter-spacing:0.13px;">Connections</div>
<div class="t" style="left:79.0px;top:1059px;font-size:10px;color:#222;letter-spacing:0.22px;">172.30.0.93</div>
<div class="t" style="left:182.9px;top:1059px;font-size:10px;color:#222;letter-spacing:0.31px;">103.202.219.59</div>
<div class="t" style="left:286.6px;top:1059px;font-size:10px;color:#222;letter-spacing:0.05px;">UNCLASSIFIED</div>
<div class="t" style="left:461.4px;top:1059px;font-size:10px;color:#222;letter-spacing:0.26px;">https</div>
<div class="t" style="left:565.0px;top:1059px;font-size:10px;color:#222;letter-spacing:0.50px;">48560</div>
<div class="t" style="left:633.0px;top:1059px;font-size:10px;color:#222;letter-spacing:0.44px;">443</div>
<div class="t" style="left:701.9px;top:1059px;font-size:10px;color:#222;letter-spacing:-0.13px;">TCP</div>
<div class="t" style="left:769.9px;top:1059px;font-size:10px;color:#222;letter-spacing:0.20px;">173.252 ms</div>
<div class="t" style="left:856.0px;top:1059px;font-size:10px;color:#222;letter-spacing:-0.10px;">0.0 ms</div>
<div class="t" style="left:943.2px;top:1059px;font-size:10px;color:#222;letter-spacing:0.15px;">182.00 Bytes</div>
<div class="t" style="left:1045.0px;top:1059px;font-size:10px;color:#222;">3</div>
<div class="t" style="left:1113.5px;top:1059px;font-size:10px;color:#222;">1</div>
<div class="t" style="left:79.0px;top:1085px;font-size:10px;color:#222;letter-spacing:0.22px;">172.30.0.93</div>
<div class="t" style="left:182.9px;top:1085px;font-size:10px;color:#222;letter-spacing:0.31px;">185.86.139.19</div>
<div class="t" style="left:286.6px;top:1085px;font-size:10px;color:#222;letter-spacing:0.05px;">UNCLASSIFIED</div>
<div class="t" style="left:461.4px;top:1085px;font-size:10px;color:#222;letter-spacing:0.26px;">https</div>
<div class="t" style="left:565.0px;top:1085px;font-size:10px;color:#222;letter-spacing:0.50px;">39222</div>
<div class="t" style="left:633.0px;top:1085px;font-size:10px;color:#222;letter-spacing:0.44px;">443</div>
<div class="t" style="left:701.9px;top:1085px;font-size:10px;color:#222;letter-spacing:-0.13px;">TCP</div>
<div class="t" style="left:769.9px;top:1085px;font-size:10px;color:#222;letter-spacing:0.20px;">142.778 ms</div>
<div class="t" style="left:856.0px;top:1085px;font-size:10px;color:#222;letter-spacing:-0.10px;">0.0 ms</div>
<div class="t" style="left:943.2px;top:1085px;font-size:10px;color:#222;letter-spacing:0.15px;">182.00 Bytes</div>
<div class="t" style="left:1045.0px;top:1085px;font-size:10px;color:#222;">3</div>
<div class="t" style="left:1113.5px;top:1085px;font-size:10px;color:#222;">1</div>
<div class="t" style="left:79.0px;top:1118px;font-size:10px;color:#222;letter-spacing:0.22px;">172.30.0.93</div>
<div class="t" style="left:182.9px;top:1112px;font-size:10px;color:#222;letter-spacing:0.54px;">sjc07-</div>
<div class="t" style="left:182.9px;top:1126px;font-size:10px;color:#222;letter-spacing:0.23px;">login.dotomi.com</div>
<div class="t" style="left:286.6px;top:1118px;font-size:10px;color:#222;letter-spacing:0.05px;">UNCLASSIFIED</div>
<div class="t" style="left:461.4px;top:1118px;font-size:10px;color:#222;letter-spacing:0.26px;">https</div>
<div class="t" style="left:565.0px;top:1118px;font-size:10px;color:#222;letter-spacing:0.50px;">41375</div>
<div class="t" style="left:633.0px;top:1118px;font-size:10px;color:#222;letter-spacing:0.44px;">443</div>
<div class="t" style="left:701.9px;top:1118px;font-size:10px;color:#222;letter-spacing:-0.13px;">TCP</div>
<div class="t" style="left:769.9px;top:1118px;font-size:10px;color:#222;letter-spacing:0.06px;">2.688 ms</div>
<div class="t" style="left:856.0px;top:1118px;font-size:10px;color:#222;letter-spacing:-0.10px;">0.0 ms</div>
<div class="t" style="left:943.2px;top:1118px;font-size:10px;color:#222;letter-spacing:0.15px;">182.00 Bytes</div>
<div class="t" style="left:1045.0px;top:1118px;font-size:10px;color:#222;">3</div>
<div class="t" style="left:1113.5px;top:1118px;font-size:10px;color:#222;">1</div>
<div class="t" style="left:79.0px;top:1158px;font-size:10px;color:#222;letter-spacing:0.22px;">172.30.0.93</div>
<div class="t" style="left:182.9px;top:1152px;font-size:10px;color:#222;letter-spacing:0.29px;">syd09s14-in-</div>
<div class="t" style="left:182.9px;top:1166px;font-size:10px;color:#222;letter-spacing:0.34px;">f10.1e100.net</div>
<div class="t" style="left:286.6px;top:1158px;font-size:10px;color:#222;letter-spacing:0.05px;">UNCLASSIFIED</div>
<div class="t" style="left:461.4px;top:1158px;font-size:10px;color:#222;letter-spacing:0.26px;">https</div>
<div class="t" style="left:565.0px;top:1158px;font-size:10px;color:#222;letter-spacing:0.50px;">48590</div>
<div class="t" style="left:633.0px;top:1158px;font-size:10px;color:#222;letter-spacing:0.44px;">443</div>
<div class="t" style="left:701.9px;top:1158px;font-size:10px;color:#222;letter-spacing:-0.13px;">TCP</div>
<div class="t" style="left:769.9px;top:1158px;font-size:10px;color:#222;letter-spacing:0.20px;">284.071 ms</div>
<div class="t" style="left:856.0px;top:1158px;font-size:10px;color:#222;letter-spacing:-0.10px;">0.0 ms</div>
<div class="t" style="left:943.2px;top:1158px;font-size:10px;color:#222;letter-spacing:0.15px;">186.00 Bytes</div>
<div class="t" style="left:1045.0px;top:1158px;font-size:10px;color:#222;">3</div>
<div class="t" style="left:1113.5px;top:1158px;font-size:10px;color:#222;">1</div>
<div class="t" style="left:182.9px;top:1193px;font-size:10px;color:#222;letter-spacing:0.29px;">syd09s14-in-</div>
<div class="ax" style="left:128.3px;top:386.1px">22:14</div>
<div class="ax" style="left:261.6px;top:386.1px">00:54</div>
<div class="ax" style="left:395.0px;top:386.1px">03:34</div>
<div class="ax" style="left:528.3px;top:386.1px">06:14</div>
<div class="ax" style="left:661.6px;top:386.1px">08:54</div>
<div class="ax" style="left:795.0px;top:386.1px">11:34</div>
<div class="ax" style="left:928.3px;top:386.1px">14:14</div>
<div class="ax" style="left:1061.6px;top:386.1px">16:54</div><div class="ax" style="left:134.3px;top:830.1px">22:14</div>
<div class="ax" style="left:268.3px;top:830.1px">00:54</div>
<div class="ax" style="left:402.3px;top:830.1px">03:34</div>
<div class="ax" style="left:536.3px;top:830.1px">06:14</div>
<div class="ax" style="left:670.3px;top:830.1px">08:54</div>
<div class="ax" style="left:804.3px;top:830.1px">11:34</div>
<div class="ax" style="left:938.3px;top:830.1px">14:14</div>
<div class="ax" style="left:1072.3px;top:830.1px">16:54</div>
</div>
<div id="vs"></div>
<div id="bot"></div>
</body>
</html>
